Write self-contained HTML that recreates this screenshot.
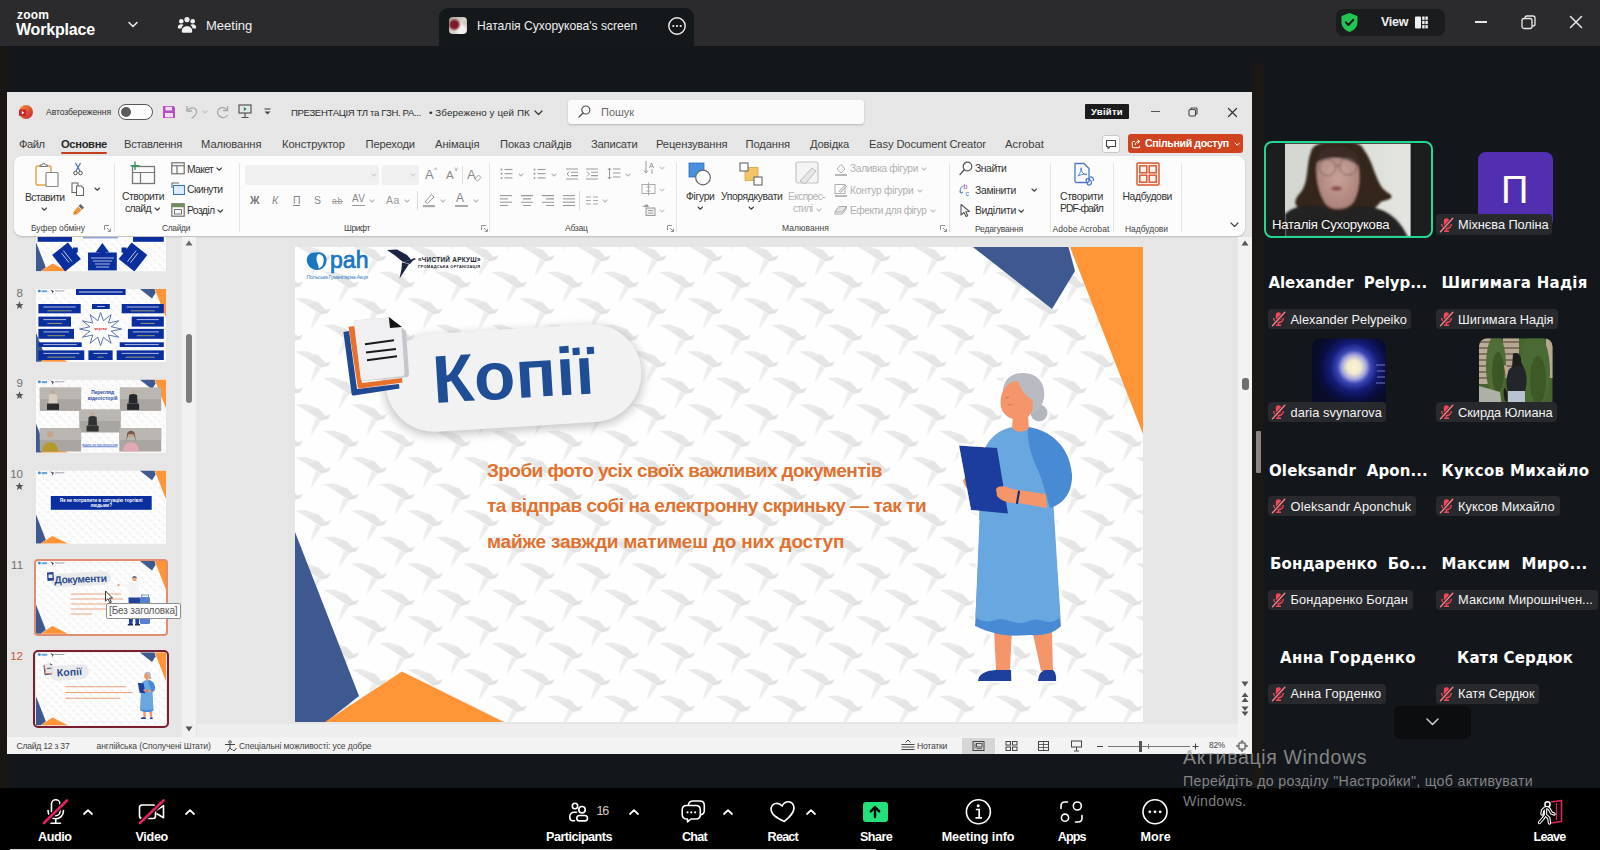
<!DOCTYPE html>
<html lang="uk">
<head>
<meta charset="utf-8">
<title>Zoom Workplace</title>
<style>
*{box-sizing:border-box;margin:0;padding:0}
html,body{width:1600px;height:850px;overflow:hidden;background:#13171b;font-family:"Liberation Sans","DejaVu Sans",sans-serif;}
#root{position:relative;width:1600px;height:850px;overflow:hidden;background:#13171b;}
.abs{position:absolute}
.t{position:absolute;white-space:nowrap}
#topbar{position:absolute;left:0;top:0;width:1600px;height:46px;background:#2b2b2d;color:#fff}
#tabactive{position:absolute;left:439px;top:8px;width:255px;height:38px;background:#15181b;border-radius:9px 9px 0 0}
#bottombar{position:absolute;left:0;top:788px;width:1600px;height:62px;background:#000}
#ppt{position:absolute;left:7px;top:92px;width:1245px;height:662px;background:#e6e6e6;overflow:hidden;color:#333}
#pptin{position:absolute;left:-7px;top:-92px;width:1600px;height:850px}
#right{position:absolute;left:1263.500px;top:46px;width:336.500px;height:742px;background:#13171b;overflow:hidden}
#rightin{position:absolute;left:-1263.500px;top:-46px;width:1600px;height:850px}
</style>
</head>
<body>
<div id="root">
<div id="topbar">
 <div id="tabactive"></div>
 <div class="abs" style="left:17px;top:8px;font-size:12px;font-weight:bold;letter-spacing:0.2px;line-height:14px">zoom</div>
 <div class="abs" style="left:16px;top:20px;font-size:16px;font-weight:bold;line-height:20px;letter-spacing:-0.2px">Workplace</div>
 <svg class="abs" style="left:127px;top:20px" width="12" height="10" viewBox="0 0 12 10"><path d="M2 2.5 L6 6.5 L10 2.5" fill="none" stroke="#e8e8e8" stroke-width="1.6" stroke-linecap="round" stroke-linejoin="round"/></svg>
 <svg class="abs" style="left:177px;top:16px" width="20" height="18" viewBox="0 0 20 18"><g fill="#f2f2f2"><circle cx="4.3" cy="5.2" r="2.3"/><circle cx="10" cy="3.6" r="2.6"/><circle cx="15.7" cy="5.2" r="2.3"/><path d="M0.8 11.5c0-2.2 1.6-3.3 3.5-3.3 1 0 1.8.3 2.4.8-1.4.8-2.1 2-2.3 3.4H1.600c-.5 0-.8-.4-.8-.9z"/><path d="M19.200 11.500c0-2.200-1.600-3.300-3.500-3.300-1 0-1.800.3-2.400.8 1.400.8 2.100 2 2.300 3.400h2.800c.5 0 .8-.4.800-.9z"/><path d="M4.800 15.200c0-3.200 2.300-5 5.200-5s5.200 1.800 5.200 5c0 .9-.6 1.500-1.400 1.500H6.200c-.8 0-1.400-.6-1.400-1.500z"/></g></svg>
 <div class="abs" style="left:206px;top:18px;font-size:13px;line-height:16px;color:#f0f0f0">Meeting</div>
 <div class="abs" style="left:449px;top:17px;width:18px;height:17px;border-radius:4px;background:radial-gradient(circle at 30% 45%,#7d1a28 0 22%,rgba(125,26,40,0) 42%),radial-gradient(circle at 70% 80%,#f4f2ee 0 20%,rgba(244,242,238,0) 45%),linear-gradient(135deg,#a79f92,#d9d5cc 50%,#a59d90)"></div>
 <div class="abs" style="left:477px;top:18px;font-size:12.1px;line-height:16px;color:#f0f0f0;white-space:nowrap">Наталія Сухорукова's screen</div>
 <svg class="abs" style="left:667px;top:16px" width="20" height="20" viewBox="0 0 20 20"><circle cx="10" cy="10" r="8.200" fill="none" stroke="#f0f0f0" stroke-width="1.400"/><circle cx="6.300" cy="10" r="1.100" fill="#f0f0f0"/><circle cx="10" cy="10" r="1.100" fill="#f0f0f0"/><circle cx="13.700" cy="10" r="1.100" fill="#f0f0f0"/></svg>
 <div class="abs" style="left:1336px;top:9px;width:109px;height:27px;border-radius:7px;background:#1b1c1e"></div>
 <svg class="abs" style="left:1340px;top:12px" width="19" height="21" viewBox="0 0 19 21"><path d="M9.500 1 L17.500 4 V10 C17.500 15 14 18.500 9.500 20 C5 18.500 1.500 15 1.500 10 V4 Z" fill="#23c552"/><path d="M5.800 10.300 L8.500 13 L13.300 7.800" fill="none" stroke="#1b1c1e" stroke-width="2" stroke-linecap="round" stroke-linejoin="round"/></svg>
 <div class="abs" style="left:1381px;top:14px;font-size:12.5px;line-height:16px;color:#f0f0f0;font-weight:bold;letter-spacing:-0.3px">View</div>
 <svg class="abs" style="left:1415px;top:16px" width="13" height="13" viewBox="0 0 13 13"><g fill="#f0f0f0"><rect x="0" y="0.500" width="6" height="12" rx="0.800"/><rect x="7.200" y="0.500" width="2.400" height="3.300"/><rect x="10.400" y="0.500" width="2.400" height="3.300"/><rect x="7.200" y="4.800" width="2.400" height="3.300"/><rect x="10.400" y="4.800" width="2.400" height="3.300"/><rect x="7.200" y="9.100" width="2.400" height="3.300"/><rect x="10.400" y="9.100" width="2.400" height="3.300"/></g></svg>
 <div class="abs" style="left:1475px;top:21px;width:12px;height:1.500px;background:#e8e8e8"></div>
 <svg class="abs" style="left:1521px;top:15px" width="15" height="15" viewBox="0 0 15 15"><rect x="1" y="3.500" width="10" height="10" rx="2" fill="none" stroke="#e8e8e8" stroke-width="1.300"/><path d="M4 3.500 V3 a2 2 0 0 1 2 -2 h6 a2 2 0 0 1 2 2 v6 a2 2 0 0 1 -2 2 h-0.600" fill="none" stroke="#e8e8e8" stroke-width="1.300"/></svg>
 <svg class="abs" style="left:1569px;top:15px" width="14" height="14" viewBox="0 0 14 14"><path d="M1.500 1.500 L12.500 12.500 M12.500 1.500 L1.500 12.500" stroke="#e8e8e8" stroke-width="1.500" stroke-linecap="round"/></svg>
</div>

<div class="abs" style="left:0;top:46px;width:7px;height:742px;background:#1a1612"></div>
<div id="ppt"><div id="pptin"><svg class="abs" style="left:18px;top:104px;" width="16" height="16" viewBox="0 0 16 16"><defs><linearGradient id="pg" x1="0" y1="0" x2="1" y2="1"><stop offset="0" stop-color="#f5923a"/><stop offset="1" stop-color="#c8202f"/></linearGradient></defs><circle cx="8" cy="8" r="7" fill="url(#pg)"/><rect x="1" y="5.500" width="7" height="6.500" rx="1.300" fill="#c9262c"/><path d="M3.800 7 L6.300 8.700 L3.800 10.400 Z" fill="#fff"/></svg><div class="t" style="left:46.0px;top:107.0px;font-size:8.6px;line-height:11px;letter-spacing:-0.09px;color:#333;">Автозбереження</div><div class="abs" style="left:118px;top:104px;width:35px;height:16px;border:1px solid #555;border-radius:8px;background:#fdfdfd"></div><div class="abs" style="left:121px;top:107px;width:10px;height:10px;border-radius:5px;background:#5c5c5c"></div><svg class="abs" style="left:162px;top:105px;" width="14" height="14" viewBox="0 0 14 14"><path d="M1 1 H11.500 L13 2.500 V13 H1 Z" fill="#b44fc4"/><rect x="3.500" y="1.800" width="6.500" height="3.600" fill="#f3def6"/><rect x="3" y="8" width="8" height="4.300" fill="#f3def6"/></svg><svg class="abs" style="left:185px;top:104px;" width="14" height="16" viewBox="0 0 14 16"><path d="M2 2 V7 H7" fill="none" stroke="#a9a9a9" stroke-width="1.300"/><path d="M2.300 6.700 C5 3 10 3 11.500 6.500 C12.500 9.500 10 12 6.500 14.500" fill="none" stroke="#a9a9a9" stroke-width="1.300"/></svg><svg class="abs" style="left:202.0px;top:110.0px;" width="6" height="4.0" viewBox="0 0 6 4.0"><path d="M1 1 L3.0 3.0 L5 1" fill="none" stroke="#c4c4c4" stroke-width="1.1" stroke-linecap="round" stroke-linejoin="round"/></svg><svg class="abs" style="left:215px;top:104px;" width="15" height="16" viewBox="0 0 15 16"><path d="M12.500 2 V6.500 H8" fill="none" stroke="#a9a9a9" stroke-width="1.300"/><path d="M12.300 6.300 C10.500 3 6 2.500 3.500 5.500 C1.500 8.500 3 12.500 7 13.500 C9.500 14 11.500 13 12.800 11" fill="none" stroke="#a9a9a9" stroke-width="1.300"/></svg><svg class="abs" style="left:238px;top:104px;" width="14" height="15" viewBox="0 0 14 15"><rect x="1" y="1" width="12" height="8" fill="none" stroke="#555" stroke-width="1.200"/><path d="M5.800 3 L8.800 5 L5.800 7 Z" fill="#2e8b57"/><path d="M7 9 V13 M3.500 13.500 H10.500" stroke="#555" stroke-width="1.200" fill="none"/></svg><svg class="abs" style="left:263px;top:108px;" width="9" height="8" viewBox="0 0 9 8"><path d="M1.500 1 H7.500" stroke="#444" stroke-width="1.100"/><path d="M1.500 3.500 L4.500 6.500 L7.500 3.500 Z" fill="#444"/></svg><div class="t" style="left:291.0px;top:106.5px;font-size:9.6px;line-height:12px;letter-spacing:-0.36px;color:#2d2d2d;">ПРЕЗЕНТАЦІЯ ТЛ та ГЗН. РА...</div><div class="t" style="left:429.0px;top:106.5px;font-size:9.8px;line-height:12px;letter-spacing:0.10px;color:#2d2d2d;">• Збережено у цей ПК</div><svg class="abs" style="left:533.5px;top:110.25px;" width="9" height="5.5" viewBox="0 0 9 5.5"><path d="M1 1 L4.5 4.5 L8 1" fill="none" stroke="#333" stroke-width="1.2" stroke-linecap="round" stroke-linejoin="round"/></svg><div class="abs" style="left:568px;top:100px;width:296px;height:24px;background:#fbfbfb;border-radius:3px;box-shadow:0 1px 2px rgba(0,0,0,.22)"></div><svg class="abs" style="left:577px;top:104px;" width="15" height="15" viewBox="0 0 15 15"><circle cx="8.800" cy="6" r="4" fill="none" stroke="#555" stroke-width="1.200"/><path d="M6 9 L2 13" stroke="#555" stroke-width="1.300" stroke-linecap="round"/></svg><div class="t" style="left:601.0px;top:105.0px;font-size:11px;line-height:14px;letter-spacing:-0.03px;color:#6a6a6a;">Пошук</div><div class="abs" style="left:1085px;top:104px;width:44px;height:15px;background:#1c1c1c;border-radius:1px"></div><div class="t" style="left:1091.0px;top:105.5px;font-size:9.5px;line-height:12px;letter-spacing:0.27px;color:#fff;font-weight:bold;">Увійти</div><div class="abs" style="left:1151px;top:111px;width:9px;height:1px;background:#555"></div><svg class="abs" style="left:1188px;top:107px;" width="10" height="10" viewBox="0 0 10 10"><rect x="1" y="2.500" width="6.500" height="6.500" rx="1" fill="none" stroke="#444" stroke-width="1.100"/><path d="M3 2.500 V1.500 a0.500 0.500 0 0 1 .5 -.5 H8.500 a0.500 0.500 0 0 1 .5 .5 V6.500 a.5 .5 0 0 1 -.5 .5 H7.500" fill="none" stroke="#444" stroke-width="1.100"/></svg><svg class="abs" style="left:1227px;top:107px;" width="11" height="11" viewBox="0 0 11 11"><path d="M1.500 1.500 L9.500 9.500 M9.500 1.500 L1.500 9.500" stroke="#333" stroke-width="1.200" stroke-linecap="round"/></svg><div class="t" style="left:19.0px;top:137.0px;font-size:11.2px;line-height:14px;letter-spacing:-0.51px;color:#3d3d3d;">Файл</div><div class="t" style="left:124.0px;top:137.0px;font-size:11.2px;line-height:14px;letter-spacing:-0.32px;color:#3d3d3d;">Вставлення</div><div class="t" style="left:201.0px;top:137.0px;font-size:11.2px;line-height:14px;letter-spacing:-0.07px;color:#3d3d3d;">Малювання</div><div class="t" style="left:282.0px;top:137.0px;font-size:11.2px;line-height:14px;letter-spacing:-0.08px;color:#3d3d3d;">Конструктор</div><div class="t" style="left:365.5px;top:137.0px;font-size:11.2px;line-height:14px;letter-spacing:-0.16px;color:#3d3d3d;">Переходи</div><div class="t" style="left:435.0px;top:137.0px;font-size:11.2px;line-height:14px;letter-spacing:-0.07px;color:#3d3d3d;">Анімація</div><div class="t" style="left:500.0px;top:137.0px;font-size:11.2px;line-height:14px;letter-spacing:-0.14px;color:#3d3d3d;">Показ слайдів</div><div class="t" style="left:591.0px;top:137.0px;font-size:11.2px;line-height:14px;letter-spacing:-0.22px;color:#3d3d3d;">Записати</div><div class="t" style="left:656.0px;top:137.0px;font-size:11.2px;line-height:14px;letter-spacing:-0.13px;color:#3d3d3d;">Рецензування</div><div class="t" style="left:745.5px;top:137.0px;font-size:11.2px;line-height:14px;letter-spacing:-0.10px;color:#3d3d3d;">Подання</div><div class="t" style="left:810.0px;top:137.0px;font-size:11.2px;line-height:14px;letter-spacing:-0.18px;color:#3d3d3d;">Довідка</div><div class="t" style="left:869.0px;top:137.0px;font-size:11.2px;line-height:14px;letter-spacing:-0.12px;color:#3d3d3d;">Easy Document Creator</div><div class="t" style="left:1005.0px;top:137.0px;font-size:11.2px;line-height:14px;letter-spacing:0.06px;color:#3d3d3d;">Acrobat</div><div class="t" style="left:61.0px;top:137.0px;font-size:11.2px;line-height:14px;letter-spacing:-0.35px;color:#262626;font-weight:bold;">Основне</div><div class="abs" style="left:61px;top:152px;width:46px;height:2px;background:#c43e1c;border-radius:1px"></div><div class="abs" style="left:1102px;top:135px;width:18px;height:18px;background:#fdfdfd;border:1px solid #c8c8c8;border-radius:3px"></div><svg class="abs" style="left:1105px;top:139px;" width="12" height="11" viewBox="0 0 12 11"><path d="M1.500 1.500 H10.500 V7.500 H5 L3 9.500 V7.500 H1.500 Z" fill="none" stroke="#444" stroke-width="1.100" stroke-linejoin="round"/></svg><div class="abs" style="left:1128px;top:134px;width:115px;height:19px;background:#d0431f;border-radius:3px"></div><svg class="abs" style="left:1131px;top:138px;" width="11" height="11" viewBox="0 0 11 11"><path d="M4 3.500 H2 a0.700 0.700 0 0 0 -.7 .7 V9 a.7 .7 0 0 0 .7 .7 H8 a.7 .7 0 0 0 .7 -.7 V7.500" fill="none" stroke="#fff" stroke-width="1"/><path d="M4 7 C4.500 4.500 6 3.500 8 3.500 M6.500 1.500 L8.700 3.500 L6.500 5.500" fill="none" stroke="#fff" stroke-width="1"/></svg><div class="t" style="left:1145.0px;top:137.0px;font-size:10.6px;line-height:13px;letter-spacing:-0.36px;color:#fff;font-weight:bold;">Спільний доступ</div><svg class="abs" style="left:1233.75px;top:141.875px;" width="6.5" height="4.25" viewBox="0 0 6.5 4.25"><path d="M1 1 L3.25 3.25 L5.5 1" fill="none" stroke="#fff" stroke-width="1" stroke-linecap="round" stroke-linejoin="round"/></svg><div class="abs" style="left:14px;top:156px;width:1231px;height:80px;background:#fcfcfc;border-radius:8px;box-shadow:0 1px 2px rgba(0,0,0,.2)"></div><svg class="abs" style="left:35px;top:162px;" width="25" height="26" viewBox="0 0 25 26"><rect x="1" y="4" width="15" height="19" rx="1.500" fill="#fff" stroke="#e2a64a" stroke-width="1.500"/><path d="M5 4.500 V3 H7 a1.700 1.700 0 0 1 3.400 0 H12.500 V4.500 Z" fill="#f4f4f4" stroke="#777" stroke-width="1"/><rect x="11" y="10.500" width="12" height="14" rx="1" fill="#fdfdfd" stroke="#888" stroke-width="1.200"/></svg><div class="t" style="left:25.0px;top:190.5px;font-size:10.4px;line-height:13px;letter-spacing:-0.62px;color:#333;">Вставити</div><svg class="abs" style="left:40.75px;top:207.375px;" width="6.5" height="4.25" viewBox="0 0 6.5 4.25"><path d="M1 1 L3.25 3.25 L5.5 1" fill="none" stroke="#444" stroke-width="1.1" stroke-linecap="round" stroke-linejoin="round"/></svg><svg class="abs" style="left:73px;top:162px;" width="10" height="14" viewBox="0 0 10 14"><path d="M2.500 1 L7 9 M7.500 1 L3 9" stroke="#4a6fa8" stroke-width="1.200"/><circle cx="2.500" cy="11" r="1.800" fill="none" stroke="#555" stroke-width="1"/><circle cx="7.500" cy="11" r="1.800" fill="none" stroke="#555" stroke-width="1"/></svg><svg class="abs" style="left:71px;top:182px;" width="14" height="15" viewBox="0 0 14 15"><path d="M1 1 H7 V10.500 H1 Z" fill="#fafafa" stroke="#666" stroke-width="1.100"/><path d="M5.500 4 H10.500 L12.500 6 V13.500 H5.500 Z" fill="#fff" stroke="#666" stroke-width="1.100"/></svg><svg class="abs" style="left:93.75px;top:187.375px;" width="6.5" height="4.25" viewBox="0 0 6.5 4.25"><path d="M1 1 L3.25 3.25 L5.5 1" fill="none" stroke="#444" stroke-width="1.1" stroke-linecap="round" stroke-linejoin="round"/></svg><svg class="abs" style="left:72px;top:203px;" width="14" height="13" viewBox="0 0 14 13"><path d="M8.500 1 L12 4.500 L10 6.500 L6.500 3 Z" fill="#666"/><path d="M6 3.500 L9.500 7 L5 11.500 H1.500 V9 Z" fill="#e9963c"/><path d="M1.500 11.500 L4 9" stroke="#b46a1a" stroke-width="0.800"/></svg><div class="t" style="left:31.0px;top:222.5px;font-size:8.5px;line-height:11px;letter-spacing:-0.04px;color:#444;">Буфер обміну</div><svg class="abs" style="left:104.0px;top:224.5px;" width="7" height="7" viewBox="0 0 7 7"><path d="M0.500 5 V0.500 H5" fill="none" stroke="#888" stroke-width="0.900"/><path d="M3 3 L6.300 6.300 M6.500 3.800 V6.500 H3.800" fill="none" stroke="#888" stroke-width="0.900"/></svg><div class="abs" style="left:114px;top:163px;width:1px;height:69px;background:#e4e4e4"></div><svg class="abs" style="left:129px;top:161px;" width="27" height="25" viewBox="0 0 27 25"><rect x="3.500" y="5.500" width="22" height="17" fill="#fafafa" stroke="#777" stroke-width="1.300"/><path d="M3.500 11.500 H25.500 M11.500 11.500 V22.500" stroke="#777" stroke-width="1.200"/><path d="M6 0.500 V9 M1.500 4.700 H10.500" stroke="#2e9b5a" stroke-width="1.400"/></svg><div class="t" style="left:122.0px;top:190.0px;font-size:10.4px;line-height:13px;letter-spacing:-0.45px;color:#333;">Створити</div><div class="t" style="left:125.0px;top:202.0px;font-size:10.4px;line-height:13px;letter-spacing:-0.59px;color:#333;">слайд</div><svg class="abs" style="left:153.75px;top:207.375px;" width="6.5" height="4.25" viewBox="0 0 6.5 4.25"><path d="M1 1 L3.25 3.25 L5.5 1" fill="none" stroke="#444" stroke-width="1.1" stroke-linecap="round" stroke-linejoin="round"/></svg><svg class="abs" style="left:171px;top:162px;" width="14" height="13" viewBox="0 0 14 13"><rect x="0.800" y="0.800" width="12.400" height="11" fill="#fafafa" stroke="#666" stroke-width="1.100"/><path d="M0.800 3.800 H13.200 M6 3.800 V11.800" stroke="#666" stroke-width="1.100"/></svg><div class="t" style="left:187.0px;top:162.5px;font-size:10.4px;line-height:13px;letter-spacing:-0.69px;color:#333;">Макет</div><svg class="abs" style="left:215.75px;top:167.375px;" width="6.5" height="4.25" viewBox="0 0 6.5 4.25"><path d="M1 1 L3.25 3.25 L5.5 1" fill="none" stroke="#444" stroke-width="1.1" stroke-linecap="round" stroke-linejoin="round"/></svg><svg class="abs" style="left:171px;top:182px;" width="14" height="13" viewBox="0 0 14 13"><rect x="2.500" y="3.500" width="11" height="9" fill="#dfeefc" stroke="#3b78b8" stroke-width="1.100"/><path d="M1 6 V1 H8" fill="none" stroke="#666" stroke-width="1.100"/></svg><div class="t" style="left:187.0px;top:183.0px;font-size:10.4px;line-height:13px;letter-spacing:-0.56px;color:#333;">Скинути</div><svg class="abs" style="left:171px;top:203px;" width="14" height="14" viewBox="0 0 14 14"><rect x="0.800" y="0.800" width="12.400" height="12.400" fill="#fafafa" stroke="#666" stroke-width="1.100"/><rect x="0.800" y="0.800" width="12.400" height="3.400" fill="#6a8f5a"/><rect x="3.500" y="6.500" width="7" height="4.500" fill="none" stroke="#666" stroke-width="0.900"/></svg><div class="t" style="left:187.0px;top:204.0px;font-size:10.4px;line-height:13px;letter-spacing:-0.61px;color:#333;">Розділ</div><svg class="abs" style="left:216.75px;top:208.875px;" width="6.5" height="4.25" viewBox="0 0 6.5 4.25"><path d="M1 1 L3.25 3.25 L5.5 1" fill="none" stroke="#444" stroke-width="1.1" stroke-linecap="round" stroke-linejoin="round"/></svg><div class="t" style="left:162.0px;top:223.0px;font-size:8.5px;line-height:11px;letter-spacing:-0.38px;color:#444;">Слайди</div><div class="abs" style="left:239px;top:163px;width:1px;height:69px;background:#e4e4e4"></div><div class="abs" style="left:245px;top:165px;width:134px;height:20px;background:#f0f0f0;border-radius:3px"></div><svg class="abs" style="left:371.0px;top:173.0px;" width="6" height="4.0" viewBox="0 0 6 4.0"><path d="M1 1 L3.0 3.0 L5 1" fill="none" stroke="#d0d0d0" stroke-width="1.1" stroke-linecap="round" stroke-linejoin="round"/></svg><div class="abs" style="left:382px;top:165px;width:37px;height:20px;background:#f0f0f0;border-radius:3px"></div><svg class="abs" style="left:410.0px;top:173.0px;" width="6" height="4.0" viewBox="0 0 6 4.0"><path d="M1 1 L3.0 3.0 L5 1" fill="none" stroke="#d0d0d0" stroke-width="1.1" stroke-linecap="round" stroke-linejoin="round"/></svg><div class="t" style="left:250.0px;top:194.0px;font-size:10.5px;line-height:13px;letter-spacing:0.51px;color:#777;font-weight:bold;">Ж</div><div class="t" style="left:272.0px;top:194.0px;font-size:10.5px;line-height:13px;letter-spacing:-0.12px;color:#888;font-style:italic;">К</div><div class="t" style="left:293.0px;top:194.0px;font-size:10.5px;line-height:13px;letter-spacing:-0.55px;color:#888;text-decoration:underline;">П</div><div class="t" style="left:314.0px;top:194.0px;font-size:10.5px;line-height:13px;letter-spacing:-1.00px;color:#888;">S</div><div class="t" style="left:332.0px;top:195.5px;font-size:8.5px;line-height:11px;letter-spacing:0.77px;color:#999;text-decoration:line-through;">ab</div><div class="t" style="left:352.0px;top:193.0px;font-size:10px;line-height:12px;letter-spacing:0.20px;color:#888;">AV</div><div class="abs" style="left:352px;top:205px;width:13px;height:1px;background:#999"></div><svg class="abs" style="left:369.0px;top:199.0px;" width="6" height="4.0" viewBox="0 0 6 4.0"><path d="M1 1 L3.0 3.0 L5 1" fill="none" stroke="#bbb" stroke-width="1.1" stroke-linecap="round" stroke-linejoin="round"/></svg><div class="t" style="left:386.0px;top:194.0px;font-size:10.5px;line-height:13px;letter-spacing:0.58px;color:#999;">Aa</div><svg class="abs" style="left:404.0px;top:199.0px;" width="6" height="4.0" viewBox="0 0 6 4.0"><path d="M1 1 L3.0 3.0 L5 1" fill="none" stroke="#bbb" stroke-width="1.1" stroke-linecap="round" stroke-linejoin="round"/></svg><div class="t" style="left:425.0px;top:166.5px;font-size:13px;line-height:16px;letter-spacing:0.33px;color:#888;">A</div><div class="t" style="left:434.0px;top:164.5px;font-size:7px;line-height:9px;letter-spacing:0.72px;color:#888;">^</div><div class="t" style="left:446.0px;top:168.0px;font-size:11.5px;line-height:14px;letter-spacing:0.33px;color:#888;">A</div><div class="t" style="left:454.0px;top:164.5px;font-size:7px;line-height:9px;letter-spacing:-0.09px;color:#888;">˅</div><div class="abs" style="left:462px;top:166px;width:1px;height:18px;background:#dcdcdc"></div><div class="t" style="left:467.0px;top:166.5px;font-size:13px;line-height:16px;letter-spacing:0.33px;color:#888;">A</div><svg class="abs" style="left:474px;top:174px;" width="8" height="8" viewBox="0 0 8 8"><path d="M1 5 L4.500 1 L7 3.500 L3.500 7 Z" fill="none" stroke="#999" stroke-width="0.900"/></svg><div class="abs" style="left:417px;top:191px;width:1px;height:19px;background:#dcdcdc"></div><svg class="abs" style="left:422px;top:193px;" width="14" height="15" viewBox="0 0 14 15"><path d="M3 9 L9.500 1.500 L12 4 L5.500 10.500 Z" fill="none" stroke="#999" stroke-width="1"/><rect x="1" y="12" width="12" height="2.200" fill="#aaa"/></svg><svg class="abs" style="left:440.0px;top:199.0px;" width="6" height="4.0" viewBox="0 0 6 4.0"><path d="M1 1 L3.0 3.0 L5 1" fill="none" stroke="#bbb" stroke-width="1.1" stroke-linecap="round" stroke-linejoin="round"/></svg><div class="t" style="left:456.0px;top:190.5px;font-size:12px;line-height:15px;letter-spacing:3.00px;color:#888;">A</div><div class="abs" style="left:455px;top:205px;width:13px;height:2px;background:#aaa"></div><svg class="abs" style="left:473.0px;top:199.0px;" width="6" height="4.0" viewBox="0 0 6 4.0"><path d="M1 1 L3.0 3.0 L5 1" fill="none" stroke="#bbb" stroke-width="1.1" stroke-linecap="round" stroke-linejoin="round"/></svg><div class="t" style="left:344.0px;top:223.0px;font-size:8.5px;line-height:11px;letter-spacing:-0.39px;color:#444;">Шрифт</div><svg class="abs" style="left:480.5px;top:224.5px;" width="7" height="7" viewBox="0 0 7 7"><path d="M0.500 5 V0.500 H5" fill="none" stroke="#888" stroke-width="0.900"/><path d="M3 3 L6.300 6.300 M6.500 3.800 V6.500 H3.800" fill="none" stroke="#888" stroke-width="0.900"/></svg><div class="abs" style="left:489px;top:163px;width:1px;height:69px;background:#e4e4e4"></div><svg class="abs" style="left:499.5px;top:168px;" width="13" height="12" viewBox="0 0 13 12"><circle cx="1.500" cy="1.5" r="1" fill="#999"/><path d="M4.500 1.5 H12.500" stroke="#999" stroke-width="1.100"/><circle cx="1.500" cy="5.7" r="1" fill="#999"/><path d="M4.500 5.7 H12.500" stroke="#999" stroke-width="1.100"/><circle cx="1.500" cy="9.9" r="1" fill="#999"/><path d="M4.500 9.9 H12.500" stroke="#999" stroke-width="1.100"/></svg><svg class="abs" style="left:518.0px;top:173.0px;" width="6" height="4.0" viewBox="0 0 6 4.0"><path d="M1 1 L3.0 3.0 L5 1" fill="none" stroke="#bbb" stroke-width="1.1" stroke-linecap="round" stroke-linejoin="round"/></svg><svg class="abs" style="left:532.5px;top:168px;" width="13" height="12" viewBox="0 0 13 12"><circle cx="1.500" cy="1.5" r="1" fill="#999"/><path d="M4.500 1.5 H12.500" stroke="#999" stroke-width="1.100"/><circle cx="1.500" cy="5.7" r="1" fill="#999"/><path d="M4.500 5.7 H12.500" stroke="#999" stroke-width="1.100"/><circle cx="1.500" cy="9.9" r="1" fill="#999"/><path d="M4.500 9.9 H12.500" stroke="#999" stroke-width="1.100"/></svg><svg class="abs" style="left:551.0px;top:173.0px;" width="6" height="4.0" viewBox="0 0 6 4.0"><path d="M1 1 L3.0 3.0 L5 1" fill="none" stroke="#bbb" stroke-width="1.1" stroke-linecap="round" stroke-linejoin="round"/></svg><svg class="abs" style="left:566px;top:168px;" width="13" height="12" viewBox="0 0 13 12"><path d="M0 1 H12 M5 4.300 H12 M5 7.600 H12 M0 11 H12" stroke="#999" stroke-width="1.100"/><path d="M3.500 3.500 L1 6 L3.500 8.500" fill="none" stroke="#999" stroke-width="1"/></svg><svg class="abs" style="left:586px;top:168px;" width="13" height="12" viewBox="0 0 13 12"><path d="M0 1 H12 M5 4.300 H12 M5 7.600 H12 M0 11 H12" stroke="#999" stroke-width="1.100"/><path d="M1 3.500 L3.500 6 L1 8.500" fill="none" stroke="#999" stroke-width="1"/></svg><svg class="abs" style="left:607px;top:167px;" width="14" height="14" viewBox="0 0 14 14"><path d="M6 2 H13.500 M6 6 H13.500 M6 10 H13.500" stroke="#999" stroke-width="1.100"/><path d="M2.500 1 V12 M0.800 3 L2.500 1 L4.200 3 M0.800 10 L2.500 12 L4.200 10" fill="none" stroke="#999" stroke-width="1"/></svg><svg class="abs" style="left:624.5px;top:173.0px;" width="6" height="4.0" viewBox="0 0 6 4.0"><path d="M1 1 L3.0 3.0 L5 1" fill="none" stroke="#bbb" stroke-width="1.1" stroke-linecap="round" stroke-linejoin="round"/></svg><svg class="abs" style="left:500px;top:195px;" width="12" height="14.2" viewBox="0 0 12 14.2"><path d="M0 0.6 H12" stroke="#999" stroke-width="1.1"/><path d="M0 3.9 H8" stroke="#999" stroke-width="1.1"/><path d="M0 7.199999999999999 H12" stroke="#999" stroke-width="1.1"/><path d="M0 10.499999999999998 H8" stroke="#999" stroke-width="1.1"/></svg><svg class="abs" style="left:521px;top:195px;" width="12" height="12" viewBox="0 0 12 12"><path d="M0 0.600 H12 M2 3.900 H10 M0 7.200 H12 M2 10.500 H10" stroke="#999" stroke-width="1.100"/></svg><svg class="abs" style="left:542px;top:195px;" width="12" height="12" viewBox="0 0 12 12"><path d="M0 0.600 H12 M4 3.900 H12 M0 7.200 H12 M4 10.500 H12" stroke="#999" stroke-width="1.100"/></svg><svg class="abs" style="left:562.5px;top:195px;" width="12" height="14.2" viewBox="0 0 12 14.2"><path d="M0 0.6 H12" stroke="#999" stroke-width="1.1"/><path d="M0 3.9 H12" stroke="#999" stroke-width="1.1"/><path d="M0 7.199999999999999 H12" stroke="#999" stroke-width="1.1"/><path d="M0 10.499999999999998 H12" stroke="#999" stroke-width="1.1"/></svg><div class="abs" style="left:579px;top:191px;width:1px;height:19px;background:#dcdcdc"></div><svg class="abs" style="left:586px;top:196px;" width="12" height="10" viewBox="0 0 12 10"><path d="M0 1 H5 M7 1 H12 M0 4.500 H5 M7 4.500 H12 M0 8 H5 M7 8 H12" stroke="#aaa" stroke-width="1.100"/></svg><svg class="abs" style="left:602.0px;top:199.0px;" width="6" height="4.0" viewBox="0 0 6 4.0"><path d="M1 1 L3.0 3.0 L5 1" fill="none" stroke="#bbb" stroke-width="1.1" stroke-linecap="round" stroke-linejoin="round"/></svg><svg class="abs" style="left:643px;top:160px;" width="13" height="15" viewBox="0 0 13 15"><path d="M3 1 V13 M1 10.500 L3 13 L5 10.500" fill="none" stroke="#999" stroke-width="1"/><path d="M8.500 3 L6.500 8 M8.500 3 L10.500 8 M7.200 6.500 H9.800" fill="none" stroke="#999" stroke-width="0.900"/><path d="M9 9 V14" stroke="#999" stroke-width="0.900"/></svg><svg class="abs" style="left:658.5px;top:166.0px;" width="6" height="4.0" viewBox="0 0 6 4.0"><path d="M1 1 L3.0 3.0 L5 1" fill="none" stroke="#ccc" stroke-width="1.1" stroke-linecap="round" stroke-linejoin="round"/></svg><svg class="abs" style="left:641px;top:182px;" width="15" height="14" viewBox="0 0 15 14"><rect x="1" y="2.500" width="13" height="9" fill="none" stroke="#aaa" stroke-width="1"/><path d="M7.500 0.500 V13.500 M5.500 5 H9.500 M5.500 9 H9.500" stroke="#aaa" stroke-width="1"/></svg><svg class="abs" style="left:658.5px;top:187.5px;" width="6" height="4.0" viewBox="0 0 6 4.0"><path d="M1 1 L3.0 3.0 L5 1" fill="none" stroke="#ccc" stroke-width="1.1" stroke-linecap="round" stroke-linejoin="round"/></svg><svg class="abs" style="left:641px;top:203px;" width="15" height="14" viewBox="0 0 15 14"><path d="M1 4 L6 1 L8 4 Z" fill="#999"/><rect x="5" y="5" width="9" height="7.500" fill="#eee" stroke="#999" stroke-width="1"/><path d="M7 7.500 H12 M7 10 H12" stroke="#999" stroke-width="0.900"/></svg><svg class="abs" style="left:658.5px;top:209.0px;" width="6" height="4.0" viewBox="0 0 6 4.0"><path d="M1 1 L3.0 3.0 L5 1" fill="none" stroke="#ccc" stroke-width="1.1" stroke-linecap="round" stroke-linejoin="round"/></svg><div class="t" style="left:565.0px;top:223.0px;font-size:8.5px;line-height:11px;letter-spacing:-0.27px;color:#444;">Абзац</div><svg class="abs" style="left:666.5px;top:224.5px;" width="7" height="7" viewBox="0 0 7 7"><path d="M0.500 5 V0.500 H5" fill="none" stroke="#888" stroke-width="0.900"/><path d="M3 3 L6.300 6.300 M6.500 3.800 V6.500 H3.800" fill="none" stroke="#888" stroke-width="0.900"/></svg><div class="abs" style="left:676px;top:163px;width:1px;height:69px;background:#e4e4e4"></div><svg class="abs" style="left:688px;top:162px;" width="24" height="24" viewBox="0 0 24 24"><rect x="1" y="1" width="15" height="14" fill="#4a90e2" stroke="#2f6fbd" stroke-width="0.800"/><circle cx="15" cy="15.500" r="7.300" fill="#fdfdfd" stroke="#666" stroke-width="1.200"/></svg><div class="t" style="left:686.0px;top:189.5px;font-size:10.4px;line-height:13px;letter-spacing:-0.36px;color:#333;">Фігури</div><svg class="abs" style="left:696.75px;top:206.375px;" width="6.5" height="4.25" viewBox="0 0 6.5 4.25"><path d="M1 1 L3.25 3.25 L5.5 1" fill="none" stroke="#444" stroke-width="1.1" stroke-linecap="round" stroke-linejoin="round"/></svg><svg class="abs" style="left:739px;top:162px;" width="24" height="24" viewBox="0 0 24 24"><rect x="6" y="5.500" width="13" height="13" fill="#f3c368" stroke="#d9a23c" stroke-width="0.800"/><rect x="1" y="1" width="8" height="8" fill="#fdfdfd" stroke="#666" stroke-width="1.100"/><rect x="15" y="15" width="8" height="8" fill="#fdfdfd" stroke="#666" stroke-width="1.100"/></svg><div class="t" style="left:721.0px;top:189.5px;font-size:10.4px;line-height:13px;letter-spacing:-0.40px;color:#333;">Упорядкувати</div><svg class="abs" style="left:747.75px;top:206.375px;" width="6.5" height="4.25" viewBox="0 0 6.5 4.25"><path d="M1 1 L3.25 3.25 L5.5 1" fill="none" stroke="#444" stroke-width="1.1" stroke-linecap="round" stroke-linejoin="round"/></svg><svg class="abs" style="left:795px;top:161px;" width="25" height="26" viewBox="0 0 25 26"><rect x="1" y="1" width="22" height="21" rx="2" fill="#f4f4f4" stroke="#c4c4c4" stroke-width="1.200"/><path d="M5 20 L17 7 L21 10 L10 23 Z" fill="#e6e6e6" stroke="#bdbdbd" stroke-width="1"/></svg><div class="t" style="left:788.0px;top:189.5px;font-size:10.2px;line-height:13px;letter-spacing:-0.61px;color:#b4b4b4;">Експрес-</div><div class="t" style="left:793.0px;top:202.0px;font-size:10.2px;line-height:13px;letter-spacing:-0.94px;color:#b4b4b4;">стилі</div><svg class="abs" style="left:816.0px;top:207.5px;" width="6" height="4.0" viewBox="0 0 6 4.0"><path d="M1 1 L3.0 3.0 L5 1" fill="none" stroke="#c4c4c4" stroke-width="1.1" stroke-linecap="round" stroke-linejoin="round"/></svg><svg class="abs" style="left:834px;top:162px;" width="14" height="14" viewBox="0 0 14 14"><path d="M3 7 L7 2.500 L11 7 L7 11 Z" fill="none" stroke="#b0b0b0" stroke-width="1"/><rect x="1" y="12" width="12" height="2" fill="#b8b8b8"/></svg><div class="t" style="left:850.0px;top:162.0px;font-size:10.2px;line-height:13px;letter-spacing:-0.34px;color:#b0b0b0;">Заливка фігури</div><svg class="abs" style="left:921.0px;top:167.0px;" width="6" height="4.0" viewBox="0 0 6 4.0"><path d="M1 1 L3.0 3.0 L5 1" fill="none" stroke="#c4c4c4" stroke-width="1.1" stroke-linecap="round" stroke-linejoin="round"/></svg><svg class="abs" style="left:834px;top:183px;" width="14" height="14" viewBox="0 0 14 14"><rect x="1" y="1.500" width="10" height="9" fill="none" stroke="#b0b0b0" stroke-width="1"/><path d="M5 8 L11 2 L12.500 3.500 L6.500 9.500 Z" fill="#ddd" stroke="#b0b0b0" stroke-width="0.800"/><rect x="1" y="12" width="12" height="2" fill="#b8b8b8"/></svg><div class="t" style="left:850.0px;top:183.5px;font-size:10.2px;line-height:13px;letter-spacing:-0.21px;color:#b0b0b0;">Контур фігури</div><svg class="abs" style="left:917.0px;top:188.5px;" width="6" height="4.0" viewBox="0 0 6 4.0"><path d="M1 1 L3.0 3.0 L5 1" fill="none" stroke="#c4c4c4" stroke-width="1.1" stroke-linecap="round" stroke-linejoin="round"/></svg><svg class="abs" style="left:834px;top:204px;" width="14" height="13" viewBox="0 0 14 13"><path d="M1 8 L5 2.500 H12.500 L8.500 8 Z" fill="#e4e4e4" stroke="#aaa" stroke-width="1"/><path d="M1 8 V10 L8.500 10 L12.500 4.500 V2.500" fill="none" stroke="#aaa" stroke-width="1"/></svg><div class="t" style="left:850.0px;top:204.0px;font-size:10.2px;line-height:13px;letter-spacing:-0.47px;color:#b0b0b0;">Ефекти для фігур</div><svg class="abs" style="left:930.0px;top:209.0px;" width="6" height="4.0" viewBox="0 0 6 4.0"><path d="M1 1 L3.0 3.0 L5 1" fill="none" stroke="#c4c4c4" stroke-width="1.1" stroke-linecap="round" stroke-linejoin="round"/></svg><div class="t" style="left:782.0px;top:223.0px;font-size:8.5px;line-height:11px;letter-spacing:0.07px;color:#444;">Малювання</div><svg class="abs" style="left:939.5px;top:224.5px;" width="7" height="7" viewBox="0 0 7 7"><path d="M0.500 5 V0.500 H5" fill="none" stroke="#888" stroke-width="0.900"/><path d="M3 3 L6.300 6.300 M6.500 3.800 V6.500 H3.800" fill="none" stroke="#888" stroke-width="0.900"/></svg><div class="abs" style="left:949px;top:163px;width:1px;height:69px;background:#e4e4e4"></div><svg class="abs" style="left:959px;top:161px;" width="14" height="15" viewBox="0 0 14 15"><circle cx="8.500" cy="5.500" r="4.300" fill="none" stroke="#555" stroke-width="1.200"/><path d="M5.500 8.500 L1 13.500" stroke="#555" stroke-width="1.300" stroke-linecap="round"/></svg><div class="t" style="left:975.0px;top:162.0px;font-size:10.4px;line-height:13px;letter-spacing:-0.45px;color:#333;">Знайти</div><svg class="abs" style="left:958px;top:182px;" width="15" height="15" viewBox="0 0 15 15"><text x="5.500" y="6.500" font-size="7" fill="#a044b8" font-family="Liberation Sans,sans-serif">b</text><text x="7.500" y="14" font-size="7" fill="#3b78b8" font-family="Liberation Sans,sans-serif">c</text><path d="M5.500 4 C2.500 4.500 1.500 8 3 11 M1.300 9.500 L3 11.300 L5 10" fill="none" stroke="#3b78b8" stroke-width="1"/></svg><div class="t" style="left:975.0px;top:183.5px;font-size:10.4px;line-height:13px;letter-spacing:-0.33px;color:#333;">Замінити</div><svg class="abs" style="left:1030.75px;top:188.375px;" width="6.5" height="4.25" viewBox="0 0 6.5 4.25"><path d="M1 1 L3.25 3.25 L5.5 1" fill="none" stroke="#444" stroke-width="1.1" stroke-linecap="round" stroke-linejoin="round"/></svg><svg class="abs" style="left:959px;top:203px;" width="12" height="15" viewBox="0 0 12 15"><path d="M2 1.500 L2 12 L5 9.500 L7 13.500 L8.700 12.700 L6.800 8.800 L10.500 8.500 Z" fill="#fdfdfd" stroke="#555" stroke-width="1.100" stroke-linejoin="round"/></svg><div class="t" style="left:975.0px;top:204.0px;font-size:10.4px;line-height:13px;letter-spacing:-0.32px;color:#333;">Виділити</div><svg class="abs" style="left:1018.25px;top:208.875px;" width="6.5" height="4.25" viewBox="0 0 6.5 4.25"><path d="M1 1 L3.25 3.25 L5.5 1" fill="none" stroke="#444" stroke-width="1.1" stroke-linecap="round" stroke-linejoin="round"/></svg><div class="t" style="left:975.0px;top:223.5px;font-size:8.5px;line-height:11px;letter-spacing:-0.18px;color:#444;">Редагування</div><div class="abs" style="left:1050px;top:163px;width:1px;height:69px;background:#e4e4e4"></div><svg class="abs" style="left:1072px;top:162px;" width="24" height="25" viewBox="0 0 24 25"><path d="M3 1.500 H12 L17 6.500 V19 a1.500 1.500 0 0 1 -1.500 1.500 H4.500 a1.500 1.500 0 0 1 -1.500 -1.500 Z" fill="#fdfdfd" stroke="#4a78c8" stroke-width="1.300"/><path d="M6 14 C8 11 9.500 8 9.500 6.500 C9.500 5 8.300 5.500 8.800 7.500 C9.500 10 12 12.500 14 12.800 C15.500 13 15 11.800 13 12 C10.500 12.200 8 13 6 14 Z" fill="none" stroke="#4a78c8" stroke-width="0.900"/><path d="M14 17.500 a2.500 2.500 0 0 1 3.500 0 L19 19 a2.500 2.500 0 0 1 -3.500 3.500 Z M17.500 15.500 a2.500 2.500 0 0 1 3.500 3.500" fill="none" stroke="#4a78c8" stroke-width="1.200"/></svg><div class="t" style="left:1060.0px;top:189.5px;font-size:10.4px;line-height:13px;letter-spacing:-0.33px;color:#333;">Створити</div><div class="t" style="left:1060.0px;top:202.0px;font-size:10.4px;line-height:13px;letter-spacing:-0.94px;color:#333;">PDF-файл</div><div class="t" style="left:1052.5px;top:223.5px;font-size:8.5px;line-height:11px;letter-spacing:0.09px;color:#444;">Adobe Acrobat</div><div class="abs" style="left:1113px;top:163px;width:1px;height:69px;background:#e4e4e4"></div><svg class="abs" style="left:1136px;top:162px;" width="24" height="24" viewBox="0 0 24 24"><g fill="#fdf1ec" stroke="#d9532c" stroke-width="1.400"><rect x="1" y="1" width="22" height="22" rx="1"/><rect x="3.800" y="3.800" width="7" height="7"/><rect x="13.200" y="3.800" width="7" height="7"/><rect x="3.800" y="13.200" width="7" height="7"/><rect x="13.200" y="13.200" width="7" height="7"/></g></svg><div class="t" style="left:1122.5px;top:189.5px;font-size:10.4px;line-height:13px;letter-spacing:-0.40px;color:#333;">Надбудови</div><div class="t" style="left:1125.0px;top:223.5px;font-size:8.5px;line-height:11px;letter-spacing:-0.05px;color:#444;">Надбудови</div><div class="abs" style="left:1181px;top:163px;width:1px;height:69px;background:#e4e4e4"></div><svg class="abs" style="left:1229.5px;top:221.75px;" width="9" height="5.5" viewBox="0 0 9 5.5"><path d="M1 1 L4.5 4.5 L8 1" fill="none" stroke="#444" stroke-width="1.2" stroke-linecap="round" stroke-linejoin="round"/></svg><div class="abs" style="left:182px;top:237px;width:14px;height:500px;background:#f1f1f1"></div><svg class="abs" style="left:185px;top:240px;" width="8" height="6" viewBox="0 0 8 6"><path d="M0.500 5.500 L4 0.500 L7.500 5.500 Z" fill="#666"/></svg><svg class="abs" style="left:185px;top:726px;" width="8" height="6" viewBox="0 0 8 6"><path d="M0.500 0.500 L4 5.500 L7.500 0.500 Z" fill="#555"/></svg><div class="abs" style="left:185.5px;top:334px;width:6.0px;height:69px;background:#7d7d7d;border-radius:3px"></div><svg class="abs" style="left:7px;top:237px" width="175" height="500" viewBox="7 237 175 500" font-family="Liberation Sans, sans-serif"><g clip-path="inset(0)"><rect x="36" y="198.5" width="130" height="73" fill="#fdfdfd"/><g transform="translate(36 198.5) scale(0.15330) translate(-295 -247)"><rect x="295" y="247" width="848" height="475" fill="url(#bp)" opacity=".55"/><path d="M973 247 L1068.500 247 L1075 271 L1052 309 Z" fill="#3d598f"/><path d="M1070 247 L1143 247 L1143 434 Z" fill="#ff9536"/><path d="M295 532 L359 696 L326 722 L295 722 Z" fill="#3d598f"/><path d="M325 722 L402 671.500 L504 722 Z" fill="#ff9536"/><path d="M316 252.500 C309 251.500 306 257 307 262 C308 266.500 312 269.500 317 270 C323 270 327 265 326.500 259 C326 254.500 322 251.500 316 252.500 Z" fill="#3f8fd0"/><rect x="331" y="255" width="37" height="14" rx="4" fill="#6aa6d8"/><path d="M387 250 L411 259.500 L416 259 L410 264 L399.500 278.500 L401.500 266 Z" fill="#39415c"/><rect x="419" y="257" width="60" height="6" fill="#9a9ca6"/></g><rect x="37.6" y="198.5" width="34.4" height="43.3" fill="#0a2e9e" /><rect x="133.0" y="198.5" width="30.8" height="43.3" fill="#0a2e9e" /><rect x="83.0" y="198.5" width="35.0" height="39.9" fill="#8ea2d8" /><rect x="-10" y="-10.500" width="20" height="21" fill="#0a2e9e" transform="translate(66.500 257) rotate(-38)"/><path d="M73 247.500 L77.800 247.500 L77.800 252 L73 256 Z" fill="#0a2e9e"/><rect x="88.0" y="252.5" width="28.8" height="17.9" fill="#0a2e9e" /><path d="M95.500 252.500 L102.400 243 L109.300 252.500 Z" fill="#0a2e9e"/><rect x="99.5" y="249.0" width="5.8" height="4.0" fill="#0a2e9e" /><rect x="-10" y="-10.500" width="20" height="21" fill="#0a2e9e" transform="translate(133 257) rotate(38)"/><path d="M121.500 247.500 L126.500 247.500 L127 256 L121.500 252 Z" fill="#0a2e9e"/><path d="M91.0 258.0 H114.0" stroke="#fff" stroke-width="0.9" opacity="0.75"/><path d="M93.0 261.0 H112.0" stroke="#fff" stroke-width="0.9" opacity="0.75"/><path d="M95.0 264.0 H110.0" stroke="#fff" stroke-width="0.9" opacity="0.75"/><path d="M96.0 267.0 H109.0" stroke="#fff" stroke-width="0.9" opacity="0.75"/><g transform="translate(66.500 257) rotate(52)"><path d="M-7.0 -1.5 H7.0" stroke="#fff" stroke-width="0.9" opacity="0.75"/><path d="M-6.0 1.5 H6.0" stroke="#fff" stroke-width="0.9" opacity="0.75"/></g><g transform="translate(133 257) rotate(-52)"><path d="M-7.0 -1.5 H7.0" stroke="#fff" stroke-width="0.9" opacity="0.75"/><path d="M-6.0 1.5 H6.0" stroke="#fff" stroke-width="0.9" opacity="0.75"/></g></g><rect x="36" y="289" width="130" height="73" fill="#fdfdfd"/><g transform="translate(36 289) scale(0.15330) translate(-295 -247)"><rect x="295" y="247" width="848" height="475" fill="url(#bp)" opacity=".55"/><path d="M973 247 L1068.500 247 L1075 271 L1052 309 Z" fill="#3d598f"/><path d="M1070 247 L1143 247 L1143 434 Z" fill="#ff9536"/><path d="M295 532 L359 696 L326 722 L295 722 Z" fill="#3d598f"/><path d="M325 722 L402 671.500 L504 722 Z" fill="#ff9536"/><path d="M316 252.500 C309 251.500 306 257 307 262 C308 266.500 312 269.500 317 270 C323 270 327 265 326.500 259 C326 254.500 322 251.500 316 252.500 Z" fill="#3f8fd0"/><rect x="331" y="255" width="37" height="14" rx="4" fill="#6aa6d8"/><path d="M387 250 L411 259.500 L416 259 L410 264 L399.500 278.500 L401.500 266 Z" fill="#39415c"/><rect x="419" y="257" width="60" height="6" fill="#9a9ca6"/></g><rect x="76.0" y="289.0" width="49.6" height="6.0" fill="#0a2e9e" /><path d="M79.0 292.0 H122.5" stroke="#fff" stroke-width="1.2" opacity="0.8"/><rect x="38.4" y="304.0" width="42.3" height="9.3" fill="#0a2e9e" /><path d="M43.4 307.0 H75.7" stroke="#fff" stroke-width="0.9" opacity="0.75"/><path d="M47.4 310.8 H71.7" stroke="#e8d94a" stroke-width="0.9" opacity="0.7"/><rect x="38.4" y="316.6" width="32.6" height="10.0" fill="#0a2e9e" /><path d="M43.4 319.6 H66.0" stroke="#fff" stroke-width="0.9" opacity="0.75"/><path d="M47.4 323.4 H62.0" stroke="#e8d94a" stroke-width="0.9" opacity="0.7"/><rect x="38.4" y="328.9" width="35.6" height="9.9" fill="#0a2e9e" /><path d="M43.4 331.9 H69.0" stroke="#fff" stroke-width="0.9" opacity="0.75"/><path d="M47.4 335.7 H65.0" stroke="#e8d94a" stroke-width="0.9" opacity="0.7"/><rect x="38.4" y="342.3" width="43.3" height="4.7" fill="#0a2e9e" /><path d="M43.4 344.6 H76.7" stroke="#fff" stroke-width="0.9" opacity="0.75"/><rect x="38.4" y="350.4" width="45.9" height="9.6" fill="#0a2e9e" /><path d="M43.4 353.4 H79.3" stroke="#fff" stroke-width="0.9" opacity="0.75"/><path d="M47.4 357.2 H75.3" stroke="#e8d94a" stroke-width="0.9" opacity="0.7"/><rect x="92.0" y="304.0" width="17.8" height="5.0" fill="#0a2e9e" /><path d="M97.0 306.5 H104.8" stroke="#fff" stroke-width="0.9" opacity="0.75"/><rect x="88.4" y="350.4" width="24.2" height="9.6" fill="#0a2e9e" /><path d="M93.4 353.4 H107.6" stroke="#fff" stroke-width="0.9" opacity="0.75"/><path d="M97.4 357.2 H103.6" stroke="#e8d94a" stroke-width="0.9" opacity="0.7"/><rect x="121.7" y="304.0" width="42.1" height="9.3" fill="#0a2e9e" /><path d="M126.7 307.0 H158.8" stroke="#fff" stroke-width="0.9" opacity="0.75"/><path d="M130.7 310.8 H154.8" stroke="#e8d94a" stroke-width="0.9" opacity="0.7"/><rect x="131.7" y="316.6" width="32.1" height="10.0" fill="#0a2e9e" /><path d="M136.7 319.6 H158.8" stroke="#fff" stroke-width="0.9" opacity="0.75"/><path d="M140.7 323.4 H154.8" stroke="#e8d94a" stroke-width="0.9" opacity="0.7"/><rect x="127.9" y="328.9" width="35.9" height="9.9" fill="#0a2e9e" /><path d="M132.9 331.9 H158.8" stroke="#fff" stroke-width="0.9" opacity="0.75"/><path d="M136.9 335.7 H154.8" stroke="#e8d94a" stroke-width="0.9" opacity="0.7"/><rect x="119.7" y="342.3" width="44.1" height="4.7" fill="#0a2e9e" /><path d="M124.7 344.6 H158.8" stroke="#fff" stroke-width="0.9" opacity="0.75"/><rect x="116.7" y="350.4" width="47.1" height="9.6" fill="#0a2e9e" /><path d="M121.7 353.4 H158.8" stroke="#fff" stroke-width="0.9" opacity="0.75"/><path d="M125.7 357.2 H154.8" stroke="#e8d94a" stroke-width="0.9" opacity="0.7"/><polygon points="100.6,312.5 103.4,320.8 111.1,314.7 108.4,323.0 118.8,320.8 111.2,326.8 121.6,329.0 111.2,331.2 118.8,337.2 108.4,335.0 111.1,343.3 103.4,337.2 100.6,345.5 97.8,337.2 90.1,343.3 92.8,335.0 82.4,337.2 90.0,331.2 79.6,329.0 90.0,326.8 82.4,320.8 92.8,323.0 90.1,314.7 97.8,320.8" fill="#fff" stroke="#3a569c" stroke-width="0.800"/><text x="100.6" y="330.3" font-size="3.6" fill="#e03030" font-weight="bold" text-anchor="middle" >жертви</text><rect x="36" y="379.8" width="130" height="73" fill="#fdfdfd"/><g transform="translate(36 379.8) scale(0.15330) translate(-295 -247)"><rect x="295" y="247" width="848" height="475" fill="url(#bp)" opacity=".55"/><path d="M973 247 L1068.500 247 L1075 271 L1052 309 Z" fill="#3d598f"/><path d="M1070 247 L1143 247 L1143 434 Z" fill="#ff9536"/><path d="M295 532 L359 696 L326 722 L295 722 Z" fill="#3d598f"/><path d="M325 722 L402 671.500 L504 722 Z" fill="#ff9536"/><path d="M316 252.500 C309 251.500 306 257 307 262 C308 266.500 312 269.500 317 270 C323 270 327 265 326.500 259 C326 254.500 322 251.500 316 252.500 Z" fill="#3f8fd0"/><rect x="331" y="255" width="37" height="14" rx="4" fill="#6aa6d8"/><path d="M387 250 L411 259.500 L416 259 L410 264 L399.500 278.500 L401.500 266 Z" fill="#39415c"/><rect x="419" y="257" width="60" height="6" fill="#9a9ca6"/></g><rect x="39.8" y="387.6" width="41.3" height="23.3" fill="#a9a5a1"/><rect x="39.8" y="387.6" width="41.3" height="11.6" fill="#bab6b2"/><circle cx="53.0" cy="392.1" r="2" fill="#c9a58c"/><path d="M49.0 395.1 Q53.0 393.1 57.0 395.1 L57.5 403.6 L48.5 403.6 Z" fill="#d8cfc0"/><path d="M47.0 403.6 H59.0 V409.9 H47.0 Z" fill="#2a2a2e"/><rect x="119.9" y="387.6" width="41.3" height="23.3" fill="#a9a5a1"/><rect x="119.9" y="387.6" width="41.3" height="11.6" fill="#bab6b2"/><circle cx="133.1" cy="392.1" r="2" fill="#c9a58c"/><path d="M129.1 395.1 Q133.1 393.1 137.1 395.1 L137.6 403.6 L128.6 403.6 Z" fill="#25272b"/><path d="M127.1 403.6 H139.1 V409.9 H127.1 Z" fill="#25272b"/><rect x="79.4" y="409.6" width="41.3" height="22.9" fill="#a9a5a1"/><rect x="79.4" y="409.6" width="41.3" height="11.4" fill="#bab6b2"/><circle cx="92.6" cy="414.1" r="2" fill="#c9a58c"/><path d="M88.6 417.1 Q92.6 415.1 96.6 417.1 L97.1 425.6 L88.1 425.6 Z" fill="#2f3331"/><path d="M86.6 425.6 H98.6 V431.5 H86.6 Z" fill="#2f3331"/><rect x="39.8" y="428.2" width="41.3" height="23.3" fill="#a9a5a1"/><rect x="39.8" y="428.2" width="41.3" height="11.7" fill="#bab6b2"/><circle cx="50.1" cy="434.2" r="3.300" fill="#c9a58c"/><path d="M42.1 451.5 C42.1 439.2 58.1 439.2 58.1 451.5 Z" fill="#b49a2c"/><rect x="119.3" y="428.2" width="41.9" height="23.3" fill="#a9a5a1"/><rect x="119.3" y="428.2" width="41.9" height="11.7" fill="#bab6b2"/><circle cx="131.0" cy="434.2" r="3.300" fill="#c9a58c"/><path d="M123.0 451.5 C123.0 439.2 139.0 439.2 139.0 451.5 Z" fill="#e2a9b4"/><path d="M127.0 435.2 C126.5 429.2 135.5 429.2 135.0 435.2 L136.0 441.2 L133.5 434.2 L128.5 434.2 L126.0 441.2 Z" fill="#7a5a48"/><text x="102.6" y="394" font-size="4.9" fill="#2f4fa8" font-weight="bold" text-anchor="middle" >Перегляд</text><text x="102.6" y="400.3" font-size="4.9" fill="#2f4fa8" font-weight="bold" text-anchor="middle" >відеоісторій</text><text x="100" y="445.8" font-size="3.7" fill="#2a55c8" text-anchor="middle" text-decoration="underline">відео за посиланням</text><path d="M83.5 446.6 H116.5" stroke="#2a55c8" stroke-width="0.5" opacity="0.9"/><rect x="36" y="470.8" width="130" height="73" fill="#fdfdfd"/><g transform="translate(36 470.8) scale(0.15330) translate(-295 -247)"><rect x="295" y="247" width="848" height="475" fill="url(#bp)" opacity=".55"/><path d="M973 247 L1068.500 247 L1075 271 L1052 309 Z" fill="#3d598f"/><path d="M1070 247 L1143 247 L1143 434 Z" fill="#ff9536"/><path d="M295 532 L359 696 L326 722 L295 722 Z" fill="#3d598f"/><path d="M325 722 L402 671.500 L504 722 Z" fill="#ff9536"/><path d="M316 252.500 C309 251.500 306 257 307 262 C308 266.500 312 269.500 317 270 C323 270 327 265 326.500 259 C326 254.500 322 251.500 316 252.500 Z" fill="#3f8fd0"/><rect x="331" y="255" width="37" height="14" rx="4" fill="#6aa6d8"/><path d="M387 250 L411 259.500 L416 259 L410 264 L399.500 278.500 L401.500 266 Z" fill="#39415c"/><rect x="419" y="257" width="60" height="6" fill="#9a9ca6"/></g><rect x="50.8" y="496.0" width="100.9" height="13.8" fill="#0a2e9e" /><text x="101.2" y="501.5" font-size="4.6" fill="#fff" font-weight="bold" text-anchor="middle" >Як не потрапити в ситуацію торгівлі</text><text x="101.2" y="507.3" font-size="4.6" fill="#fff" font-weight="bold" text-anchor="middle" >людьми?</text><rect x="36" y="561" width="130" height="73" fill="#fdfdfd"/><g transform="translate(36 561) scale(0.15330) translate(-295 -247)"><rect x="295" y="247" width="848" height="475" fill="url(#bp)" opacity=".55"/><path d="M973 247 L1068.500 247 L1075 271 L1052 309 Z" fill="#3d598f"/><path d="M1070 247 L1143 247 L1143 434 Z" fill="#ff9536"/><path d="M295 532 L359 696 L326 722 L295 722 Z" fill="#3d598f"/><path d="M325 722 L402 671.500 L504 722 Z" fill="#ff9536"/><path d="M316 252.500 C309 251.500 306 257 307 262 C308 266.500 312 269.500 317 270 C323 270 327 265 326.500 259 C326 254.500 322 251.500 316 252.500 Z" fill="#3f8fd0"/><rect x="331" y="255" width="37" height="14" rx="4" fill="#6aa6d8"/><path d="M387 250 L411 259.500 L416 259 L410 264 L399.500 278.500 L401.500 266 Z" fill="#39415c"/><rect x="419" y="257" width="60" height="6" fill="#9a9ca6"/></g><g transform="rotate(-3 80 580)"><rect x="51" y="572.500" width="60" height="13.500" rx="6.700" fill="#ebebed"/></g><path d="M47 572.500 L53.500 572 L54 580.500 L47.500 581 Z" fill="#27468c"/><path d="M48.500 574.500 H52.500 V578 H48.500 Z" fill="#e9e9ee"/><g transform="rotate(-2 55 583)"><text x="54.5" y="583.6" font-size="10.3" fill="#2a4b8d" font-weight="bold" text-anchor="start" letter-spacing="-0.35">Документи</text></g><path d="M70.7 594.0 H121.0" stroke="#e58a5a" stroke-width="1" opacity="0.75"/><path d="M70.7 599.0 H123.0" stroke="#e58a5a" stroke-width="1" opacity="0.75"/><path d="M70.7 604.0 H118.0" stroke="#e58a5a" stroke-width="1" opacity="0.75"/><path d="M70.7 609.0 H112.0" stroke="#e58a5a" stroke-width="1" opacity="0.75"/><path d="M70.7 614.0 H92.0" stroke="#e58a5a" stroke-width="1" opacity="0.75"/><circle cx="134.500" cy="579" r="2.300" fill="#f0a480"/><path d="M132.300 578 C132.300 575.500 136.800 575.500 136.800 578.300 L134.500 577.300 Z" fill="#23356e"/><path d="M129.500 583 L139 582.500 L140 598 L129 598 Z" fill="#f4f4f6"/><path d="M129.500 584 L119.500 584.500 L119 586 L129.500 587.500 Z" fill="#f4f4f6"/><circle cx="118.500" cy="585" r="1.200" fill="#f0a480"/><path d="M128.500 597.500 L140.500 597.500 L139 624 L135.500 624 L134.500 604 L132.500 624 L129 624 Z" fill="#23409a"/><rect x="140" y="597" width="10" height="27" rx="1.500" fill="#5b7fd0"/><rect x="141.500" y="595" width="7" height="3" fill="none" stroke="#5b7fd0" stroke-width="0.800"/><path d="M128 624 H133 V625.500 H127.500 Z M135 624 H140 V625.500 H135 Z" fill="#1c2c66"/><rect x="36" y="652.5" width="130" height="73" fill="#fdfdfd"/><g transform="translate(36 652.5) scale(0.15330) translate(-295 -247)"><rect x="295" y="247" width="848" height="475" fill="url(#bp)" opacity=".55"/><path d="M973 247 L1068.500 247 L1075 271 L1052 309 Z" fill="#3d598f"/><path d="M1070 247 L1143 247 L1143 434 Z" fill="#ff9536"/><path d="M295 532 L359 696 L326 722 L295 722 Z" fill="#3d598f"/><path d="M325 722 L402 671.500 L504 722 Z" fill="#ff9536"/><path d="M316 252.500 C309 251.500 306 257 307 262 C308 266.500 312 269.500 317 270 C323 270 327 265 326.500 259 C326 254.500 322 251.500 316 252.500 Z" fill="#3f8fd0"/><rect x="331" y="255" width="37" height="14" rx="4" fill="#6aa6d8"/><path d="M387 250 L411 259.500 L416 259 L410 264 L399.500 278.500 L401.500 266 Z" fill="#39415c"/><rect x="419" y="257" width="60" height="6" fill="#9a9ca6"/></g><g transform="translate(36 652.5) scale(0.15330) translate(-295 -247)"><g transform="rotate(-3.500 513.500 378)"><rect x="385.500" y="329" width="256" height="98" rx="49" fill="#ebebed"/></g><path d="M343.400 332 L349 331 L357 389 L399 384 L399.500 388.500 L354 395.500 L351.600 394 Z" fill="#1f4a93"/><path d="M348.500 326.800 L355 326 L362 383 L402 378 L402.500 382.500 L360 388.500 L357.700 387 Z" fill="#e8702a"/><path d="M353.700 320.600 L389 317.500 L406 331 L409 374 L406.500 377.200 L363 381 L360.800 379 Z" fill="#e4e4e8"/><path d="M388.800 317 L402 327 L390 328 Z" fill="#151515"/><path d="M366 352.600 L396 349" stroke="#333" stroke-width="5"/><g transform="rotate(-3.500 436 403)"><text x="432" y="403" font-size="67.5" letter-spacing="1.11" fill="#27488c" font-weight="bold" >Копії</text></g><path d="M487 470 H880" stroke="#e58a5a" stroke-width="7" opacity=".8"/><path d="M487 508 H925" stroke="#e58a5a" stroke-width="7" opacity=".8"/><path d="M487 546 H843" stroke="#e58a5a" stroke-width="7" opacity=".8"/><path d="M994 630 L1012 630 L1010 671 L996 671 Z" fill="#f4956b"/><path d="M1032 630 L1052 630 L1053 671 L1041 671 Z" fill="#f4956b"/><path d="M978 681 C978 674 986 670 996 670 L1011 670 L1011.500 681 Z" fill="#1f3f9c"/><path d="M1038 681 C1038 675 1041 670 1046 670 L1053 670 C1056 672 1056.500 677 1056 681 Z" fill="#1f3f9c"/><path d="M981 500 L1052 500 L1061 626 C1054 634 1040 636 1030 635 C1015 637 995 636 975 626 Z" fill="#4a8ad4"/><path d="M981 480 L1052 480 L1060.500 617 C1053 624 1047 622 1040 620 C1032 618 1026 624 1018 623 C1008 622 1003 617 995 620 C987 623 980 621 975.500 617 Z" fill="#69a7e1"/><path d="M1012 427 C995 431 984 442 981 462 L979 520 L1053 520 L1050 440 C1045 432 1035 428 1028 427 Z" fill="#69a7e1"/><path d="M1028 427 C1052 430 1070 448 1072 474 C1073 492 1064 504 1050 508 C1046 496 1043 480 1036 466 C1030 452 1027 440 1028 427 Z" fill="#4a8ad4"/><path d="M1013 414 L1028 414 L1029 428 C1024 433 1016 433 1012 428 Z" fill="#f4956b"/><circle cx="1039" cy="413" r="8.500" fill="#b4b6be"/><path d="M1003 392 C1003 378 1013 372.500 1024 373 C1038 373.500 1046 384 1044 397 C1043 406 1038 412 1031 413 L1020 395 Z" fill="#b9bbc3"/><path d="M1004 389 C1000 396 999 405 1003 412 C1008 420 1020 422 1028 417 C1033 413 1034 405 1032 399 C1028 398 1022 392 1018 381 C1012 381 1007 384 1004 389 Z" fill="#f4956b"/><path d="M1018 376 C1018 386 1024 396 1034 400 L1038 396 L1030 376 Z" fill="#b9bbc3"/><path d="M1006 398 l3 -1 M1008 404 c1.500 1.500 3 1.500 4.500 0.500" stroke="#c0643f" stroke-width="0.700" fill="none"/><path d="M963 480 C965 476 969 477 970 481 L971 489 C968 490 964 487 963 480 Z" fill="#f4956b"/><path d="M959 445.500 L997 448 L1008 513.500 L971 510 Z" fill="#1e3e9d"/><path d="M996 489 C999 485 1006 486 1012 489 L1046 494 L1047 508 L1018 503 C1010 504 1001 501 997 496 Z" fill="#f4956b"/><path d="M1019 491.500 L1017 503" stroke="#1f2f7a" stroke-width="2.200" stroke-linecap="round"/></g></svg><div class="abs" style="left:34px;top:559px;width:134px;height:77px;border:2px solid #e18d70;border-radius:4px"></div><div class="abs" style="left:33px;top:650px;width:136px;height:78px;border:2.500px solid #7a1f30;border-radius:5px"></div><div class="t" style="left:16.6px;top:285.5px;font-size:11.5px;line-height:14px;letter-spacing:0.00px;color:#707070;">8</div><div class="t" style="left:16.6px;top:376.0px;font-size:11.5px;line-height:14px;letter-spacing:0.00px;color:#707070;">9</div><div class="t" style="left:10.2px;top:467.0px;font-size:11.5px;line-height:14px;letter-spacing:0.00px;color:#707070;">10</div><div class="t" style="left:11.1px;top:557.5px;font-size:11.5px;line-height:14px;letter-spacing:0.00px;color:#707070;">11</div><div class="t" style="left:10.2px;top:648.5px;font-size:11.5px;line-height:14px;letter-spacing:0.00px;color:#c8583a;">12</div><svg class="abs" style="left:14.5px;top:300.5px;" width="9" height="9" viewBox="0 0 9 9"><polygon points="4.50,0.30 5.56,3.04 8.49,3.20 6.21,5.06 6.97,7.90 4.50,6.30 2.03,7.90 2.79,5.06 0.51,3.20 3.44,3.04" fill="#555"/></svg><svg class="abs" style="left:14.5px;top:391.0px;" width="9" height="9" viewBox="0 0 9 9"><polygon points="4.50,0.30 5.56,3.04 8.49,3.20 6.21,5.06 6.97,7.90 4.50,6.30 2.03,7.90 2.79,5.06 0.51,3.20 3.44,3.04" fill="#555"/></svg><svg class="abs" style="left:14.5px;top:482.0px;" width="9" height="9" viewBox="0 0 9 9"><polygon points="4.50,0.30 5.56,3.04 8.49,3.20 6.21,5.06 6.97,7.90 4.50,6.30 2.03,7.90 2.79,5.06 0.51,3.20 3.44,3.04" fill="#555"/></svg><div class="abs" style="left:106px;top:603px;width:74.5px;height:15.5px;background:#fdfdfd;border:1px solid #8f8f8f;border-radius:2px"></div><div class="t" style="left:109.0px;top:605.0px;font-size:10px;line-height:12px;letter-spacing:-0.15px;color:#5a5a5a;">[Без заголовка]</div><svg class="abs" style="left:104px;top:590px;" width="9" height="14" viewBox="0 0 9 14"><path d="M1.500 1 L1.500 11 L4 8.700 L5.800 12.800 L7.300 12.100 L5.500 8.200 L8.500 8 Z" fill="#fff" stroke="#222" stroke-width="0.900" stroke-linejoin="round"/></svg><svg class="abs" style="left:295px;top:247px" width="848" height="475" viewBox="295 247 848 475" font-family="Liberation Sans, sans-serif"><defs><g id="bd"><path d="M0 0.500 L10 0 L23 4.500 L30 12 L21 13.500 L11 7 Z" fill="#dedede"/><path d="M21 13.500 L30 12 L35.500 10 L32.500 15 L26 16.500 Z" fill="#d2d2d2"/><path d="M12 6.500 L23 4.500 L30 12 L21 13.500 Z" fill="#d6d6d6"/><path d="M20.500 14 L26 16.500 L15 32 L17 23.500 Z" fill="#e3e3e3"/></g><pattern id="bp" x="293.500" y="243" width="56" height="53" patternUnits="userSpaceOnUse"><use href="#bd" x="2" y="2" opacity=".64"/><use href="#bd" x="2" y="-51" opacity=".64"/><use href="#bd" x="-54" y="2" opacity=".64"/><use href="#bd" x="-54" y="-51" opacity=".64"/><use href="#bd" x="30" y="28.5" opacity=".64"/><use href="#bd" x="30" y="-24.5" opacity=".64"/><use href="#bd" x="-26" y="28.5" opacity=".64"/><use href="#bd" x="-26" y="-24.5" opacity=".64"/></pattern><filter id="sh" x="-10%" y="-20%" width="120%" height="150%"><feGaussianBlur stdDeviation="5"/></filter><filter id="halo" x="-15%" y="-5%" width="130%" height="110%"><feMorphology in="SourceAlpha" operator="dilate" radius="2" result="d"/><feGaussianBlur in="d" stdDeviation="0.900" result="b"/><feFlood flood-color="#ffffff" result="f"/><feComposite in="f" in2="b" operator="in" result="h"/><feMerge><feMergeNode in="h"/><feMergeNode in="SourceGraphic"/></feMerge></filter><filter id="sh2" x="-20%" y="-20%" width="140%" height="140%"><feGaussianBlur stdDeviation="2.500"/></filter></defs><rect x="295" y="247" width="848" height="475" fill="#fefefe"/><rect x="295" y="247" width="848" height="475" fill="url(#bp)"/><path d="M973 247 L1068.500 247 L1075 271 L1052 309 Z" fill="#3d598f"/><path d="M1070 247 L1143 247 L1143 434 Z" fill="#ff9536"/><path d="M295 532 L359 696 L326 722 L295 722 Z" fill="#3d598f"/><path d="M325 722 L402 671.500 L504 722 Z" fill="#ff9536"/><path d="M316 252.500 C309 251.500 306 257 307 262 C308 266.500 312 269.500 317 270 C323 270 327 265 326.500 259 C326 254.500 322 251.500 316 252.500 Z" fill="#1976c0"/><path d="M318.500 254 C322.500 254 324.500 258 323.500 262.500 C323 266 320.500 268 318.500 268.500 C319.500 266 316.500 263 316.500 259 C316.500 256.500 317 255 318.500 254 Z" fill="#fff"/><text x="330" y="268.4" font-size="23" letter-spacing="0.04" fill="#1976c0" stroke="#1976c0" stroke-width="0.700">pah</text><text x="306.5" y="279.3" font-size="5.4" letter-spacing="-0.34" fill="#3f86c4" >Польська Гуманітарна Акція</text><path d="M387 250 L397 249.500 L407 255 L411 259.500 L403 262 L395 255.500 Z" fill="#1b2443"/><path d="M403 262 L411 259.500 L414.500 258 L416 259 L413 260.500 L410 264 Z" fill="#1b2443"/><path d="M402 262.500 L409 264 L399.500 278.500 L401.500 269 Z" fill="#1b2443"/><text x="418" y="262.3" font-size="6.4" letter-spacing="0.29" fill="#20232e" font-weight="bold" >«ЧИСТИЙ АРКУШ»</text><text x="418" y="268" font-size="3.9" letter-spacing="0.34" fill="#20232e" font-weight="bold" >ГРОМАДСЬКА ОРГАНІЗАЦІЯ</text><g transform="rotate(-3.500 513.500 378)"><rect x="383.500" y="331" width="260" height="100" rx="50" fill="#9a9a9a" opacity=".55" filter="url(#sh)"/><rect x="385.500" y="329" width="256" height="98" rx="49" fill="#f2f2f3"/></g><g><path d="M343.400 332 L349 331 L357 389 L399 384 L399.500 388.500 L354 395.500 C352.500 395.800 351.800 395 351.600 394 Z" fill="#1f4a93"/><path d="M348.500 326.800 L355 326 L362 383 L402 378 L402.500 382.500 L360 388.500 C358.500 388.800 357.900 388 357.700 387 Z" fill="#e8702a"/><path d="M353.700 320.600 L389 317.500 L406 331 L409 374 C409 376 408 377 406.500 377.200 L363 381 C361.500 381 361 380 360.800 379 Z" fill="#c7c7cb"/><path d="M353.700 320.600 L389 317.500 L401.500 327.500 L404.500 373 C404.500 375 403.500 376 402 376.200 L363 380.500 C361.500 380.500 361 379.500 360.800 378.500 Z" fill="#f0f0f2"/><path d="M388.800 317 L402 327 L390 328 Z" fill="#151515"/><path d="M365 344.300 L394 340.200 M366 352.600 L396 349 M367 360.200 L397 356.200" stroke="#1a1a1a" stroke-width="2"/></g><g transform="rotate(-3.500 436 403)"><text x="434" y="403" font-size="67.5" letter-spacing="0.21" fill="#1f4e96" font-weight="bold" >Копії</text></g><text x="487" y="476.5" font-size="19" letter-spacing="-0.57" fill="#e0712f" font-weight="bold" >Зроби фото усіх своїх важливих документів</text><text x="487" y="512" font-size="19" letter-spacing="-0.49" fill="#e0712f" font-weight="bold" >та відправ собі на електронну скриньку — так ти</text><text x="487" y="548" font-size="19" letter-spacing="-0.19" fill="#e0712f" font-weight="bold" >майже завжди матимеш до них доступ</text><g filter="url(#halo)"><path d="M994 630 L1012 630 L1010 671 L996 671 Z" fill="#f4956b"/><path d="M1032 630 L1052 630 L1053 671 L1041 671 Z" fill="#f4956b"/><path d="M978 681 C978 674 986 670 996 670 L1011 670 L1011.500 681 Z" fill="#1f3f9c"/><path d="M1038 681 C1038 675 1041 670 1046 670 L1053 670 C1056 672 1056.500 677 1056 681 Z" fill="#1f3f9c"/><path d="M981 500 L1052 500 L1061 626 C1054 634 1040 636 1030 635 C1015 637 995 636 975 626 Z" fill="#4a8ad4"/><path d="M981 480 L1052 480 L1060.500 617 C1053 624 1047 622 1040 620 C1032 618 1026 624 1018 623 C1008 622 1003 617 995 620 C987 623 980 621 975.500 617 Z" fill="#69a7e1"/><path d="M1012 427 C995 431 984 442 981 462 L979 520 L1053 520 L1050 440 C1045 432 1035 428 1028 427 Z" fill="#69a7e1"/><path d="M1028 427 C1052 430 1070 448 1072 474 C1073 492 1064 504 1050 508 C1046 496 1043 480 1036 466 C1030 452 1027 440 1028 427 Z" fill="#4a8ad4"/><path d="M1013 414 L1028 414 L1029 428 C1024 433 1016 433 1012 428 Z" fill="#f4956b"/><circle cx="1039" cy="413" r="8.500" fill="#b4b6be"/><path d="M1003 392 C1003 378 1013 372.500 1024 373 C1038 373.500 1046 384 1044 397 C1043 406 1038 412 1031 413 L1020 395 Z" fill="#b9bbc3"/><path d="M1004 389 C1000 396 999 405 1003 412 C1008 420 1020 422 1028 417 C1033 413 1034 405 1032 399 C1028 398 1022 392 1018 381 C1012 381 1007 384 1004 389 Z" fill="#f4956b"/><path d="M1018 376 C1018 386 1024 396 1034 400 L1038 396 L1030 376 Z" fill="#b9bbc3"/><path d="M1006 398 l3 -1 M1008 404 c1.500 1.500 3 1.500 4.500 0.500" stroke="#c0643f" stroke-width="0.700" fill="none"/><path d="M963 480 C965 476 969 477 970 481 L971 489 C968 490 964 487 963 480 Z" fill="#f4956b"/><path d="M959 445.500 L997 448 L1008 513.500 L971 510 Z" fill="#1e3e9d"/><path d="M996 489 C999 485 1006 486 1012 489 L1046 494 L1047 508 L1018 503 C1010 504 1001 501 997 496 Z" fill="#f4956b"/><path d="M1019 491.500 L1017 503" stroke="#1f2f7a" stroke-width="2.200" stroke-linecap="round"/></g></svg><div class="abs" style="left:197px;top:724px;width:1041px;height:13px;background:#eeeeee"></div><div class="abs" style="left:1238px;top:237px;width:14px;height:500px;background:#f3f3f3"></div><svg class="abs" style="left:1241px;top:240px;" width="8" height="6" viewBox="0 0 8 6"><path d="M0.500 5.500 L4 0.500 L7.500 5.500 Z" fill="#555"/></svg><div class="abs" style="left:1242px;top:377.5px;width:6.5px;height:12.5px;background:#6e6e6e;border-radius:3px"></div><svg class="abs" style="left:1241px;top:681px;" width="8" height="6" viewBox="0 0 8 6"><path d="M0.500 0.500 L4 5.500 L7.500 0.500 Z" fill="#555"/></svg><svg class="abs" style="left:1241px;top:692px;" width="8" height="11" viewBox="0 0 8 11"><path d="M0.500 5 L4 0.500 L7.500 5 Z M0.500 10 L4 5.500 L7.500 10 Z" fill="#555"/></svg><svg class="abs" style="left:1241px;top:706px;" width="8" height="11" viewBox="0 0 8 11"><path d="M0.500 0.500 L4 5 L7.500 0.500 Z M0.500 5.500 L4 10 L7.500 5.500 Z" fill="#555"/></svg><div class="abs" style="left:7px;top:737px;width:1245px;height:17px;background:#f3f3f3"></div><div class="t" style="left:16.5px;top:740.5px;font-size:8.6px;line-height:11px;letter-spacing:-0.24px;color:#444;">Слайд 12 з 37</div><div class="t" style="left:96.5px;top:740.5px;font-size:8.6px;line-height:11px;letter-spacing:-0.13px;color:#444;">англійська (Сполучені Штати)</div><svg class="abs" style="left:224px;top:740px;" width="13" height="12" viewBox="0 0 13 12"><circle cx="6" cy="2" r="1.300" fill="none" stroke="#444" stroke-width="0.900"/><path d="M1 4.500 H11 M6 4.500 V8 M6 8 L3.500 11.500 M6 8 L8 10" fill="none" stroke="#444" stroke-width="1"/><path d="M8.500 9.500 L10 11 L12.500 8" fill="none" stroke="#444" stroke-width="1"/></svg><div class="t" style="left:239.0px;top:740.5px;font-size:8.6px;line-height:11px;letter-spacing:-0.11px;color:#444;">Спеціальні можливості: усе добре</div><svg class="abs" style="left:901px;top:739px;" width="14" height="12" viewBox="0 0 14 12"><path d="M4.500 3.500 L7 1 L9.500 3.500" fill="none" stroke="#444" stroke-width="1"/><path d="M0.500 5.500 H13.500 M0.500 8 H13.500 M0.500 10.500 H13.500" stroke="#444" stroke-width="1"/></svg><div class="t" style="left:917.0px;top:740.5px;font-size:8.6px;line-height:11px;letter-spacing:-0.25px;color:#444;">Нотатки</div><div class="abs" style="left:962px;top:738px;width:33px;height:16px;background:#d6d6d6"></div><svg class="abs" style="left:972px;top:740px;" width="13" height="12" viewBox="0 0 13 12"><rect x="1" y="1.500" width="11" height="9" fill="none" stroke="#444" stroke-width="1"/><rect x="4.500" y="3.500" width="5.500" height="3.500" fill="none" stroke="#444" stroke-width="0.900"/><path d="M3 3.500 V8.500 M4.500 8.700 H10" stroke="#444" stroke-width="0.800"/></svg><svg class="abs" style="left:1005px;top:740px;" width="13" height="12" viewBox="0 0 13 12"><g fill="none" stroke="#444" stroke-width="1"><rect x="1" y="1.500" width="4.500" height="3.500"/><rect x="7.500" y="1.500" width="4.500" height="3.500"/><rect x="1" y="7" width="4.500" height="3.500"/><rect x="7.500" y="7" width="4.500" height="3.500"/></g></svg><svg class="abs" style="left:1037px;top:740px;" width="13" height="12" viewBox="0 0 13 12"><rect x="1.500" y="1.500" width="10" height="9" fill="none" stroke="#444" stroke-width="1"/><path d="M6.500 1.500 V10.500 M1.500 4.500 H11.500 M1.500 7.500 H11.500" stroke="#444" stroke-width="0.800"/></svg><svg class="abs" style="left:1070px;top:740px;" width="13" height="12" viewBox="0 0 13 12"><rect x="1.500" y="1" width="10" height="6" fill="none" stroke="#444" stroke-width="1"/><path d="M6.500 7 V10.500 M4 11 H9" stroke="#444" stroke-width="1"/></svg><div class="abs" style="left:1097px;top:746px;width:6px;height:1px;background:#444"></div><div class="abs" style="left:1108px;top:746px;width:82px;height:1px;background:#777"></div><div class="abs" style="left:1139px;top:741px;width:3px;height:11px;background:#555"></div><div class="abs" style="left:1148px;top:744px;width:1px;height:5px;background:#777"></div><svg class="abs" style="left:1192px;top:743px;" width="7" height="7" viewBox="0 0 7 7"><path d="M0.500 3.500 H6.500 M3.500 0.500 V6.500" stroke="#444" stroke-width="1"/></svg><div class="t" style="left:1209.0px;top:741.0px;font-size:8.2px;line-height:10px;letter-spacing:-0.14px;color:#444;">82%</div><svg class="abs" style="left:1236px;top:740px;" width="12" height="12" viewBox="0 0 12 12"><rect x="3" y="3" width="6" height="6" fill="none" stroke="#444" stroke-width="1"/><path d="M6 0.500 V3 M6 9 V11.500 M0.500 6 H3 M9 6 H11.500 M4.500 2 L6 0.500 L7.500 2 M4.500 10 L6 11.500 L7.500 10 M2 4.500 L0.500 6 L2 7.500 M10 4.500 L11.500 6 L10 7.500" fill="none" stroke="#444" stroke-width="0.800"/></svg></div></div>
<div class="abs" style="left:1252px;top:46px;width:11.500px;height:742px;background:linear-gradient(#13171b 0,#13171b 14px,#1b1715 22px)"></div>
<div id="right"><div id="rightin"><svg class="abs" style="left:1264px;top:141px;" width="170" height="98" viewBox="1264 141 170 98"><rect x="1266" y="143.500" width="165" height="93" fill="#1b1d1f"/><defs><linearGradient id="wbg" x1="0" y1="0" x2="1" y2="0"><stop offset="0" stop-color="#d2d6d0"/><stop offset="1" stop-color="#e4e5e0"/></linearGradient><radialGradient id="fc" cx=".5" cy=".45" r=".6"><stop offset="0" stop-color="#c9a197"/><stop offset="1" stop-color="#a97f76"/></radialGradient><clipPath id="wc"><rect x="1285" y="143.500" width="125.600" height="93"/></clipPath><filter id="wbl"><feGaussianBlur stdDeviation="0.900"/></filter></defs><g clip-path="url(#wc)"><rect x="1285" y="143.500" width="126" height="93" fill="url(#wbg)"/><g filter="url(#wbl)"><path d="M1311 152 C1312 138 1360 136 1364 150 C1372 160 1374 174 1381 186 C1385 193 1394 194 1391 198 C1387 201 1381 200 1379 204 C1371 214 1352 216 1340 214 C1326 216 1306 214 1299 208 C1292 204 1296 197 1301 192 C1309 182 1306 164 1311 152 Z" fill="#35261f"/><path d="M1317 162 C1320 152 1352 151 1357 162 C1361 172 1360 190 1354 201 C1349 210 1331 212 1325 203 C1318 192 1315 174 1317 162 Z" fill="url(#fc)"/><path d="M1314 166 C1316 150 1330 146 1340 147 C1352 147 1360 154 1361 168 C1352 160 1340 157 1332 158 C1324 158 1318 161 1314 166 Z" fill="#3a2b26"/><circle cx="1327.500" cy="167.500" r="8" fill="rgba(220,215,210,.12)" stroke="#6b5a54" stroke-width="0.900"/><circle cx="1348" cy="166.500" r="8.300" fill="rgba(220,215,210,.12)" stroke="#6b5a54" stroke-width="0.900"/><path d="M1335.500 166.500 Q1338 165 1339.800 166" stroke="#6b5a54" stroke-width="0.800" fill="none"/><ellipse cx="1336.500" cy="188.500" rx="5.500" ry="2.200" fill="#8a4a50"/><path d="M1285 214 C1296 204 1310 205 1322 206 C1332 214 1344 214 1356 206 C1372 205 1392 210 1403 228 L1408 237 L1285 237 Z" fill="#202123"/></g></g></svg><div class="abs" style="left:1263.8px;top:141px;width:169.20000000000005px;height:97.4px;border:2.600px solid #24d790;border-radius:8px"></div><div class="t" style="left:1272.0px;top:216.8px;font-size:13.2px;line-height:16px;letter-spacing:-0.28px;color:#fafafa;text-shadow:0 0 2px rgba(0,0,0,.7);">Наталія Сухорукова</div><div class="abs" style="left:1478px;top:152px;width:74.5px;height:76px;background:#512fb0;border-radius:8px"></div><div class="t" style="left:1501.0px;top:166.0px;font-size:38px;line-height:48px;letter-spacing:0.69px;color:#fff;">П</div><div class="abs" style="left:1435.5px;top:214.4px;width:116.5px;height:20.299999999999983px;background:#27292c;border-radius:4px"></div><svg class="abs" style="left:1438.5px;top:216.5px;" width="15" height="16" viewBox="0 0 15 16"><rect x="4.800" y="1.200" width="5.400" height="8.600" rx="2.700" fill="#f2475a"/><path d="M2.700 7 C2.700 13 12.300 13 12.300 7" fill="none" stroke="#f2475a" stroke-width="1.400"/><path d="M7.500 11.500 V14 M5 14.300 H10" stroke="#f2475a" stroke-width="1.400"/><path d="M1.500 14.800 L13.800 1.200" stroke="#25282b" stroke-width="3"/><path d="M1.500 14.800 L13.800 1.200" stroke="#f7808c" stroke-width="1.400" stroke-linecap="round"/></svg><div class="t" style="left:1458.1px;top:216.9px;font-size:12.8px;line-height:16px;letter-spacing:-0.06px;color:#f4f4f4;">Міхнєва Поліна</div><div class="t" style="left:1268.5px;top:273.8px;font-size:15px;line-height:19px;letter-spacing:-0.08px;color:#fff;font-weight:bold;font-family:'DejaVu Sans','Liberation Sans',sans-serif;">Alexander  Pelyp...</div><div class="t" style="left:1441.4px;top:273.8px;font-size:15px;line-height:19px;letter-spacing:0.26px;color:#fff;font-weight:bold;font-family:'DejaVu Sans','Liberation Sans',sans-serif;">Шигимага Надія</div><div class="abs" style="left:1268px;top:309.0px;width:142.5px;height:20.30000000000001px;background:#27292c;border-radius:4px"></div><svg class="abs" style="left:1271px;top:311.1px;" width="15" height="16" viewBox="0 0 15 16"><rect x="4.800" y="1.200" width="5.400" height="8.600" rx="2.700" fill="#f2475a"/><path d="M2.700 7 C2.700 13 12.300 13 12.300 7" fill="none" stroke="#f2475a" stroke-width="1.400"/><path d="M7.500 11.500 V14 M5 14.300 H10" stroke="#f2475a" stroke-width="1.400"/><path d="M1.500 14.800 L13.800 1.200" stroke="#25282b" stroke-width="3"/><path d="M1.500 14.800 L13.800 1.200" stroke="#f7808c" stroke-width="1.400" stroke-linecap="round"/></svg><div class="t" style="left:1290.6px;top:311.5px;font-size:12.8px;line-height:16px;letter-spacing:-0.02px;color:#f4f4f4;">Alexander Pelypeiko</div><div class="abs" style="left:1435.5px;top:309.0px;width:122.5px;height:20.30000000000001px;background:#27292c;border-radius:4px"></div><svg class="abs" style="left:1438.5px;top:311.1px;" width="15" height="16" viewBox="0 0 15 16"><rect x="4.800" y="1.200" width="5.400" height="8.600" rx="2.700" fill="#f2475a"/><path d="M2.700 7 C2.700 13 12.300 13 12.300 7" fill="none" stroke="#f2475a" stroke-width="1.400"/><path d="M7.500 11.500 V14 M5 14.300 H10" stroke="#f2475a" stroke-width="1.400"/><path d="M1.500 14.800 L13.800 1.200" stroke="#25282b" stroke-width="3"/><path d="M1.500 14.800 L13.800 1.200" stroke="#f7808c" stroke-width="1.400" stroke-linecap="round"/></svg><div class="t" style="left:1458.1px;top:311.5px;font-size:12.8px;line-height:16px;letter-spacing:0.01px;color:#f4f4f4;">Шигимага Надія</div><svg class="abs" style="left:1310px;top:336px;" width="78" height="86" viewBox="1310 336 78 86"><defs><radialGradient id="dg" cx="1354" cy="367" r="40" gradientUnits="userSpaceOnUse"><stop offset="0" stop-color="#fbf4d2"/><stop offset=".17" stop-color="#f1e9cf"/><stop offset=".3" stop-color="#a9a8dc"/><stop offset=".42" stop-color="#3a46b4"/><stop offset=".6" stop-color="#141c78"/><stop offset=".82" stop-color="#0a0e42"/><stop offset="1" stop-color="#090c28"/></radialGradient><clipPath id="dc"><rect x="1312" y="338.500" width="74" height="82" rx="8"/></clipPath></defs><g clip-path="url(#dc)"><rect x="1312" y="338" width="74" height="84" fill="url(#dg)"/><path d="M1376 365 h9 M1377 371 h8 M1377 377 h8 M1376 383 h9" stroke="#7d86c8" stroke-width="1.400" opacity=".6"/></g></svg><svg class="abs" style="left:1477px;top:336px;" width="78" height="86" viewBox="1477 336 78 86"><defs><clipPath id="sc"><rect x="1479" y="338.500" width="73.500" height="82" rx="8"/></clipPath><filter id="sbl"><feGaussianBlur stdDeviation="0.700"/></filter></defs><g clip-path="url(#sc)"><rect x="1479" y="338" width="74" height="84" fill="#47632f"/><g filter="url(#sbl)"><rect x="1479" y="338" width="12" height="46" fill="#b9ac98"/><path d="M1479 342 h12 M1479 348 h12 M1479 354 h12 M1479 360 h12 M1479 366 h12 M1479 372 h12 M1479 378 h12" stroke="#6e5f4e" stroke-width="1.600"/><rect x="1503" y="338" width="16" height="40" fill="#b5a792"/><path d="M1503 342 h16 M1503 348 h16 M1503 354 h16 M1503 360 h16 M1503 366 h16" stroke="#6e5f4e" stroke-width="1.600"/><rect x="1546" y="338" width="7" height="40" fill="#b5a792"/><ellipse cx="1496" cy="366" rx="10" ry="32" fill="#4f6d34"/><ellipse cx="1535" cy="372" rx="15" ry="40" fill="#4a6a31"/><ellipse cx="1498" cy="372" rx="6" ry="20" fill="#3c5727"/><ellipse cx="1538" cy="380" rx="8" ry="24" fill="#3d5a28"/><path d="M1479 386 L1500 392 L1504 422 L1479 422 Z" fill="#aeb0a6"/><path d="M1513 354 C1518 351 1522 356 1521 362 L1524 368 L1512 368 Z" fill="#1d1a1a"/><path d="M1508 372 C1510 364 1523 364 1525 370 C1528 378 1526 388 1525 392 L1508 392 C1506 386 1506 378 1508 372 Z" fill="#23272b"/><path d="M1504 366 C1505 364 1508 366 1508 372 L1506 376 Z" fill="#c9a58c"/><path d="M1508 391 L1525 391 L1525 422 L1508 422 Z" fill="#b9c2d0"/><path d="M1504 388 C1507 388 1508 396 1507 402 C1505 402 1503 398 1504 388 Z" fill="#1d1f22"/></g></g></svg><div class="abs" style="left:1268px;top:402.0px;width:117.5px;height:20.30000000000001px;background:#27292c;border-radius:4px"></div><svg class="abs" style="left:1271px;top:404.1px;" width="15" height="16" viewBox="0 0 15 16"><rect x="4.800" y="1.200" width="5.400" height="8.600" rx="2.700" fill="#f2475a"/><path d="M2.700 7 C2.700 13 12.300 13 12.300 7" fill="none" stroke="#f2475a" stroke-width="1.400"/><path d="M7.500 11.500 V14 M5 14.300 H10" stroke="#f2475a" stroke-width="1.400"/><path d="M1.500 14.800 L13.800 1.200" stroke="#25282b" stroke-width="3"/><path d="M1.500 14.800 L13.800 1.200" stroke="#f7808c" stroke-width="1.400" stroke-linecap="round"/></svg><div class="t" style="left:1290.6px;top:404.5px;font-size:12.8px;line-height:16px;letter-spacing:0.07px;color:#f4f4f4;">daria svynarova</div><div class="abs" style="left:1435.5px;top:402.0px;width:121.0px;height:20.30000000000001px;background:#27292c;border-radius:4px"></div><svg class="abs" style="left:1438.5px;top:404.1px;" width="15" height="16" viewBox="0 0 15 16"><rect x="4.800" y="1.200" width="5.400" height="8.600" rx="2.700" fill="#f2475a"/><path d="M2.700 7 C2.700 13 12.300 13 12.300 7" fill="none" stroke="#f2475a" stroke-width="1.400"/><path d="M7.500 11.500 V14 M5 14.300 H10" stroke="#f2475a" stroke-width="1.400"/><path d="M1.500 14.800 L13.800 1.200" stroke="#25282b" stroke-width="3"/><path d="M1.500 14.800 L13.800 1.200" stroke="#f7808c" stroke-width="1.400" stroke-linecap="round"/></svg><div class="t" style="left:1458.1px;top:404.5px;font-size:12.8px;line-height:16px;letter-spacing:-0.06px;color:#f4f4f4;">Скирда Юлиана</div><div class="t" style="left:1269.0px;top:462.0px;font-size:15px;line-height:19px;letter-spacing:0.12px;color:#fff;font-weight:bold;font-family:'DejaVu Sans','Liberation Sans',sans-serif;">Oleksandr  Apon...</div><div class="t" style="left:1441.4px;top:462.0px;font-size:15px;line-height:19px;letter-spacing:0.35px;color:#fff;font-weight:bold;font-family:'DejaVu Sans','Liberation Sans',sans-serif;">Куксов Михайло</div><div class="abs" style="left:1268px;top:496.2px;width:148px;height:20.30000000000001px;background:#27292c;border-radius:4px"></div><svg class="abs" style="left:1271px;top:498.3px;" width="15" height="16" viewBox="0 0 15 16"><rect x="4.800" y="1.200" width="5.400" height="8.600" rx="2.700" fill="#f2475a"/><path d="M2.700 7 C2.700 13 12.300 13 12.300 7" fill="none" stroke="#f2475a" stroke-width="1.400"/><path d="M7.500 11.500 V14 M5 14.300 H10" stroke="#f2475a" stroke-width="1.400"/><path d="M1.500 14.800 L13.800 1.200" stroke="#25282b" stroke-width="3"/><path d="M1.500 14.800 L13.800 1.200" stroke="#f7808c" stroke-width="1.400" stroke-linecap="round"/></svg><div class="t" style="left:1290.6px;top:498.7px;font-size:12.8px;line-height:16px;letter-spacing:0.15px;color:#f4f4f4;">Oleksandr Aponchuk</div><div class="abs" style="left:1435.5px;top:496.2px;width:124.0px;height:20.30000000000001px;background:#27292c;border-radius:4px"></div><svg class="abs" style="left:1438.5px;top:498.3px;" width="15" height="16" viewBox="0 0 15 16"><rect x="4.800" y="1.200" width="5.400" height="8.600" rx="2.700" fill="#f2475a"/><path d="M2.700 7 C2.700 13 12.300 13 12.300 7" fill="none" stroke="#f2475a" stroke-width="1.400"/><path d="M7.500 11.500 V14 M5 14.300 H10" stroke="#f2475a" stroke-width="1.400"/><path d="M1.500 14.800 L13.800 1.200" stroke="#25282b" stroke-width="3"/><path d="M1.500 14.800 L13.800 1.200" stroke="#f7808c" stroke-width="1.400" stroke-linecap="round"/></svg><div class="t" style="left:1458.1px;top:498.7px;font-size:12.8px;line-height:16px;letter-spacing:-0.02px;color:#f4f4f4;">Куксов Михайло</div><div class="t" style="left:1270.0px;top:554.7px;font-size:15px;line-height:19px;letter-spacing:0.10px;color:#fff;font-weight:bold;font-family:'DejaVu Sans','Liberation Sans',sans-serif;">Бондаренко  Бо...</div><div class="t" style="left:1441.4px;top:554.7px;font-size:15px;line-height:19px;letter-spacing:0.35px;color:#fff;font-weight:bold;font-family:'DejaVu Sans','Liberation Sans',sans-serif;">Максим  Миро...</div><div class="abs" style="left:1268px;top:589.6px;width:144.5px;height:20.300000000000068px;background:#27292c;border-radius:4px"></div><svg class="abs" style="left:1271px;top:591.7px;" width="15" height="16" viewBox="0 0 15 16"><rect x="4.800" y="1.200" width="5.400" height="8.600" rx="2.700" fill="#f2475a"/><path d="M2.700 7 C2.700 13 12.300 13 12.300 7" fill="none" stroke="#f2475a" stroke-width="1.400"/><path d="M7.500 11.500 V14 M5 14.300 H10" stroke="#f2475a" stroke-width="1.400"/><path d="M1.500 14.800 L13.800 1.200" stroke="#25282b" stroke-width="3"/><path d="M1.500 14.800 L13.800 1.200" stroke="#f7808c" stroke-width="1.400" stroke-linecap="round"/></svg><div class="t" style="left:1290.6px;top:592.1px;font-size:12.8px;line-height:16px;letter-spacing:0.07px;color:#f4f4f4;">Бондаренко Богдан</div><div class="abs" style="left:1435.5px;top:589.6px;width:162.5px;height:20.300000000000068px;background:#27292c;border-radius:4px"></div><svg class="abs" style="left:1438.5px;top:591.7px;" width="15" height="16" viewBox="0 0 15 16"><rect x="4.800" y="1.200" width="5.400" height="8.600" rx="2.700" fill="#f2475a"/><path d="M2.700 7 C2.700 13 12.300 13 12.300 7" fill="none" stroke="#f2475a" stroke-width="1.400"/><path d="M7.500 11.500 V14 M5 14.300 H10" stroke="#f2475a" stroke-width="1.400"/><path d="M1.500 14.800 L13.800 1.200" stroke="#25282b" stroke-width="3"/><path d="M1.500 14.800 L13.800 1.200" stroke="#f7808c" stroke-width="1.400" stroke-linecap="round"/></svg><div class="t" style="left:1458.1px;top:592.1px;font-size:12.8px;line-height:16px;letter-spacing:0.08px;color:#f4f4f4;">Максим Мирошнічен...</div><div class="t" style="left:1280.0px;top:648.7px;font-size:15px;line-height:19px;letter-spacing:0.35px;color:#fff;font-weight:bold;font-family:'DejaVu Sans','Liberation Sans',sans-serif;">Анна Горденко</div><div class="t" style="left:1457.0px;top:648.7px;font-size:15px;line-height:19px;letter-spacing:0.12px;color:#fff;font-weight:bold;font-family:'DejaVu Sans','Liberation Sans',sans-serif;">Катя Сердюк</div><div class="abs" style="left:1268px;top:683.6px;width:117.5px;height:20.300000000000068px;background:#27292c;border-radius:4px"></div><svg class="abs" style="left:1271px;top:685.7px;" width="15" height="16" viewBox="0 0 15 16"><rect x="4.800" y="1.200" width="5.400" height="8.600" rx="2.700" fill="#f2475a"/><path d="M2.700 7 C2.700 13 12.300 13 12.300 7" fill="none" stroke="#f2475a" stroke-width="1.400"/><path d="M7.500 11.500 V14 M5 14.300 H10" stroke="#f2475a" stroke-width="1.400"/><path d="M1.500 14.800 L13.800 1.200" stroke="#25282b" stroke-width="3"/><path d="M1.500 14.800 L13.800 1.200" stroke="#f7808c" stroke-width="1.400" stroke-linecap="round"/></svg><div class="t" style="left:1290.6px;top:686.1px;font-size:12.8px;line-height:16px;letter-spacing:0.23px;color:#f4f4f4;">Анна Горденко</div><div class="abs" style="left:1435.5px;top:683.6px;width:103.5px;height:20.300000000000068px;background:#27292c;border-radius:4px"></div><svg class="abs" style="left:1438.5px;top:685.7px;" width="15" height="16" viewBox="0 0 15 16"><rect x="4.800" y="1.200" width="5.400" height="8.600" rx="2.700" fill="#f2475a"/><path d="M2.700 7 C2.700 13 12.300 13 12.300 7" fill="none" stroke="#f2475a" stroke-width="1.400"/><path d="M7.500 11.500 V14 M5 14.300 H10" stroke="#f2475a" stroke-width="1.400"/><path d="M1.500 14.800 L13.800 1.200" stroke="#25282b" stroke-width="3"/><path d="M1.500 14.800 L13.800 1.200" stroke="#f7808c" stroke-width="1.400" stroke-linecap="round"/></svg><div class="t" style="left:1458.1px;top:686.1px;font-size:12.8px;line-height:16px;letter-spacing:-0.01px;color:#f4f4f4;">Катя Сердюк</div><div class="abs" style="left:1394px;top:705.5px;width:76.5px;height:33.5px;background:#0c0d0e;border-radius:6px"></div><svg class="abs" style="left:1425.5px;top:718.25px;" width="13" height="7.5" viewBox="0 0 13 7.5"><path d="M1 1 L6.5 6.5 L12 1" fill="none" stroke="#c8c8c8" stroke-width="1.6" stroke-linecap="round" stroke-linejoin="round"/></svg></div></div>
<div class="abs" style="left:1256px;top:430.500px;width:4.500px;height:42px;background:#8b8684;border-radius:1px"></div>
<div class="abs" style="left:0px;top:788px;width:1600px;height:62px;background:#000"></div><div class="abs" style="left:10px;top:848.5px;width:866px;height:1.5px;background:#d9d9d9"></div><svg class="abs" style="left:42px;top:797px;" width="28" height="29" viewBox="0 0 28 29"><rect x="9.500" y="2.700" width="8.500" height="16" rx="4.250" fill="none" stroke="#fff" stroke-width="1.600"/><path d="M6 13.500 C6 24.500 21.500 24.500 21.500 13.500" fill="none" stroke="#fff" stroke-width="1.600" stroke-linecap="round"/><path d="M13.750 22 V26 M9 26.300 H18.500" stroke="#fff" stroke-width="1.600" stroke-linecap="round"/><path d="M2 26 L25 3.500" stroke="#000" stroke-width="5"/><path d="M2 26 L25 3.500" stroke="#e0245e" stroke-width="2.600" stroke-linecap="round"/></svg><svg class="abs" style="left:81.8px;top:808px;" width="12" height="8" viewBox="0 0 12 8"><path d="M2 6 L6 2.200 L10 6" fill="none" stroke="#fff" stroke-width="1.800" stroke-linecap="round" stroke-linejoin="round"/></svg><div class="t" style="left:38.0px;top:828.5px;font-size:12.6px;line-height:16px;letter-spacing:-0.44px;color:#fff;font-weight:bold;">Audio</div><svg class="abs" style="left:137px;top:797px;" width="30" height="29" viewBox="0 0 30 29"><rect x="2.500" y="8" width="16" height="13.500" rx="2.500" fill="none" stroke="#fff" stroke-width="1.600"/><path d="M19.500 13 L26.500 8.700 V20.800 L19.500 16.500" fill="none" stroke="#fff" stroke-width="1.600" stroke-linejoin="round"/><path d="M3 26 L26.500 3.500" stroke="#000" stroke-width="5"/><path d="M3 26 L26.500 3.500" stroke="#e0245e" stroke-width="2.600" stroke-linecap="round"/></svg><svg class="abs" style="left:184px;top:808px;" width="12" height="8" viewBox="0 0 12 8"><path d="M2 6 L6 2.200 L10 6" fill="none" stroke="#fff" stroke-width="1.800" stroke-linecap="round" stroke-linejoin="round"/></svg><div class="t" style="left:135.5px;top:828.5px;font-size:12.6px;line-height:16px;letter-spacing:-0.32px;color:#fff;font-weight:bold;">Video</div><svg class="abs" style="left:567px;top:801px;" width="23" height="22" viewBox="0 0 23 22"><circle cx="8" cy="5" r="2.700" fill="none" stroke="#fff" stroke-width="1.600"/><circle cx="15" cy="8.700" r="3.200" fill="none" stroke="#fff" stroke-width="1.600"/><path d="M9.500 11.300 H7 C4.500 11.300 2.800 13 2.800 15.500 V16.500 C2.800 18.500 4 19.800 6 19.800 H7.500" fill="none" stroke="#fff" stroke-width="1.600" stroke-linecap="round"/><rect x="9.800" y="14.500" width="10.700" height="5.400" rx="2.700" fill="none" stroke="#fff" stroke-width="1.600"/></svg><div class="t" style="left:596.5px;top:802.5px;font-size:12.5px;line-height:16px;letter-spacing:-1.20px;color:#d4ccc4;">16</div><svg class="abs" style="left:627.7px;top:808px;" width="12" height="8" viewBox="0 0 12 8"><path d="M2 6 L6 2.200 L10 6" fill="none" stroke="#fff" stroke-width="1.800" stroke-linecap="round" stroke-linejoin="round"/></svg><div class="t" style="left:546.0px;top:828.5px;font-size:12.6px;line-height:16px;letter-spacing:-0.51px;color:#fff;font-weight:bold;">Participants</div><svg class="abs" style="left:680px;top:799px;" width="26" height="25" viewBox="0 0 26 25"><path d="M8.500 5.500 C9 3.300 10.800 2 13 2 H20 C22.800 2 24.300 3.800 24.300 6.500 V11.500 C24.300 13.800 23 15.300 21 15.800" fill="none" stroke="#fff" stroke-width="1.600" stroke-linecap="round"/><path d="M6.500 6.500 H16 C18.800 6.500 20.300 8.300 20.300 11 V15.500 C20.300 18.200 18.800 20 16 20 H11 L7.500 23 V20 H6.500 C3.700 20 2.200 18.200 2.200 15.500 V11 C2.200 8.300 3.700 6.500 6.500 6.500 Z" fill="#000" stroke="#fff" stroke-width="1.600" stroke-linejoin="round"/><circle cx="7.500" cy="13.300" r="1.100" fill="#fff"/><circle cx="11.300" cy="13.300" r="1.100" fill="#fff"/><circle cx="15.100" cy="13.300" r="1.100" fill="#fff"/></svg><svg class="abs" style="left:721.8px;top:808px;" width="12" height="8" viewBox="0 0 12 8"><path d="M2 6 L6 2.200 L10 6" fill="none" stroke="#fff" stroke-width="1.800" stroke-linecap="round" stroke-linejoin="round"/></svg><div class="t" style="left:682.0px;top:828.5px;font-size:12.6px;line-height:16px;letter-spacing:-0.80px;color:#fff;font-weight:bold;">Chat</div><svg class="abs" style="left:769px;top:800px;" width="28" height="24" viewBox="0 0 28 24"><path d="M14 21.500 C9 18.500 2.500 14.500 2.500 8.500 C2.500 5 5 2.500 8 2.500 C10.500 2.500 12.800 4 14 6 C15.200 4 17.500 2.500 20 2.500 C23 2.500 25.500 5 25.500 8.500 C25.500 14.500 19 18.500 14 21.500 Z" fill="none" stroke="#fff" stroke-width="1.600" stroke-linejoin="round" transform="rotate(-8 14 12)"/></svg><svg class="abs" style="left:805.3px;top:808px;" width="12" height="8" viewBox="0 0 12 8"><path d="M2 6 L6 2.200 L10 6" fill="none" stroke="#fff" stroke-width="1.800" stroke-linecap="round" stroke-linejoin="round"/></svg><div class="t" style="left:767.6px;top:828.5px;font-size:12.6px;line-height:16px;letter-spacing:-0.78px;color:#fff;font-weight:bold;">React</div><div class="abs" style="left:862.5px;top:801.5px;width:25.5px;height:20.0px;background:#23e07a;border-radius:3px"></div><svg class="abs" style="left:868px;top:804px;" width="14" height="15" viewBox="0 0 14 15"><path d="M7 13 V3.500 M2.800 7.300 L7 3 L11.200 7.300" fill="none" stroke="#000" stroke-width="2.400" stroke-linecap="round" stroke-linejoin="round"/></svg><div class="t" style="left:860.0px;top:828.5px;font-size:12.6px;line-height:16px;letter-spacing:-0.56px;color:#fff;font-weight:bold;">Share</div><svg class="abs" style="left:964px;top:798px;" width="28" height="28" viewBox="0 0 28 28"><circle cx="14.400" cy="13.800" r="12" fill="none" stroke="#fff" stroke-width="1.600"/><circle cx="14.200" cy="7.800" r="1.500" fill="#fff"/><path d="M11.800 11.500 H15.200 V19.500 M11.500 19.800 H18" fill="none" stroke="#fff" stroke-width="1.700"/></svg><div class="t" style="left:941.7px;top:828.5px;font-size:12.6px;line-height:16px;letter-spacing:-0.12px;color:#fff;font-weight:bold;">Meeting info</div><svg class="abs" style="left:1058px;top:799px;" width="27" height="26" viewBox="0 0 27 26"><path d="M3 9.500 V7 C3 4.500 4.500 3 7 3 H9.500" fill="none" stroke="#fff" stroke-width="1.600" stroke-linecap="round"/><path d="M24 16.500 V19 C24 21.500 22.500 23 20 23 H17.500" fill="none" stroke="#fff" stroke-width="1.600" stroke-linecap="round"/><circle cx="19.300" cy="7" r="4" fill="none" stroke="#fff" stroke-width="1.600"/><circle cx="7" cy="18.700" r="3.600" fill="none" stroke="#fff" stroke-width="1.600"/></svg><div class="t" style="left:1057.8px;top:828.5px;font-size:12.6px;line-height:16px;letter-spacing:-0.90px;color:#fff;font-weight:bold;">Apps</div><svg class="abs" style="left:1141px;top:798px;" width="28" height="28" viewBox="0 0 28 28"><circle cx="14" cy="13.800" r="12" fill="none" stroke="#fff" stroke-width="1.600"/><circle cx="8.800" cy="13.800" r="1.400" fill="#fff"/><circle cx="14" cy="13.800" r="1.400" fill="#fff"/><circle cx="19.200" cy="13.800" r="1.400" fill="#fff"/></svg><div class="t" style="left:1140.4px;top:828.5px;font-size:12.6px;line-height:16px;letter-spacing:0.07px;color:#fff;font-weight:bold;">More</div><svg class="abs" style="left:1536px;top:798px;" width="30" height="28" viewBox="0 0 30 28"><path d="M15 4 L25.500 2.500 V23.500 L15 25" fill="none" stroke="#e0245e" stroke-width="1.600" stroke-linejoin="round"/><path d="M20.500 5 V22" stroke="#e0245e" stroke-width="1.200"/><circle cx="11.500" cy="6.300" r="2.600" fill="#000" stroke="#fff" stroke-width="1.500"/><path d="M9 10 C11 9.300 13 10 13.800 12 L15.500 15 L18 16 M9 10 L6.500 12.500 L6 16 M9.500 10.500 L9.500 17 L12.800 20 L13.500 25 M9.500 17 L7 20.500 L3.500 24.500" fill="none" stroke="#fff" stroke-width="3.400" stroke-linecap="round" stroke-linejoin="round"/><path d="M9 10 C11 9.300 13 10 13.800 12 L15.500 15 L18 16 M9 10 L6.500 12.500 L6 16 M9.500 10.500 L9.500 17 L12.800 20 L13.500 25 M9.500 17 L7 20.500 L3.500 24.500" fill="none" stroke="#000" stroke-width="1.200" stroke-linecap="round" stroke-linejoin="round"/></svg><div class="t" style="left:1533.6px;top:828.5px;font-size:12.6px;line-height:16px;letter-spacing:-0.75px;color:#fff;font-weight:bold;">Leave</div><div class="t" style="left:1183.0px;top:744.6px;font-size:19.5px;line-height:24px;letter-spacing:0.64px;color:rgba(165,165,165,.78);">Активація Windows</div><div class="t" style="left:1183.0px;top:772.3px;font-size:14.2px;line-height:18px;letter-spacing:0.31px;color:rgba(165,165,165,.78);">Перейдіть до розділу "Настройки", щоб активувати</div><div class="t" style="left:1183.0px;top:792.3px;font-size:14.2px;line-height:18px;letter-spacing:0.26px;color:rgba(165,165,165,.78);">Windows.</div>
</div>
</body>
</html>
